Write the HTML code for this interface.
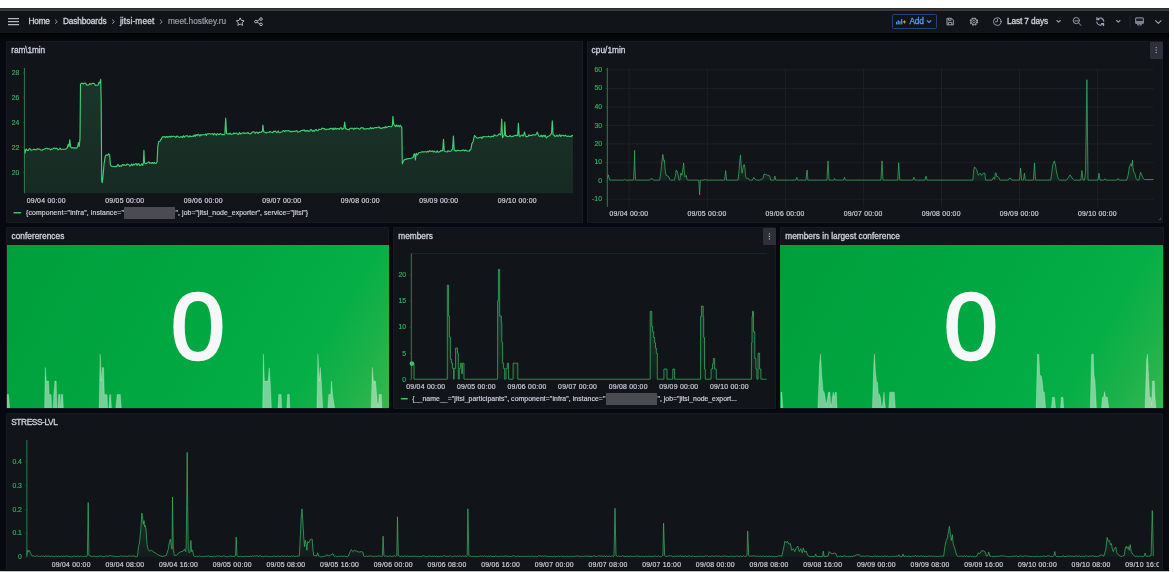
<!DOCTYPE html>
<html lang="en">
<head>
<meta charset="utf-8">
<title>meet.hostkey.ru - jitsi-meet - Dashboards - Grafana</title>
<style>
html,body{margin:0;padding:0;}
body{width:1174px;height:572px;overflow:hidden;background:#fff;position:relative;font-family:"Liberation Sans",sans-serif;}
.win{position:absolute;left:0;top:8px;width:1169px;height:563px;background:#070910;overflow:hidden;}
.edge{position:absolute;left:0;top:570px;width:1169px;height:2px;background:linear-gradient(#0a0c10 0,#0a0c10 50%,#c4c4c6 50%,#c4c4c6 100%);}
.chrome{position:absolute;left:0;top:8px;width:1169px;height:3px;background:#3a3a3a;border-top:1px solid #2a2a2a;box-sizing:border-box;}
.shadow{position:absolute;left:0;top:33px;width:1169px;height:6px;background:linear-gradient(#010102,#070910);}
.topbar{position:absolute;left:0;top:11px;width:1169px;height:22px;background:#111419;}
.t{position:absolute;white-space:nowrap;margin:0;padding:0;-webkit-text-stroke:0.18px;}
.panel{position:absolute;background:#111419;border:1px solid #171a20;box-sizing:border-box;border-radius:1px;overflow:hidden;}
.abs{position:absolute;left:0;top:0;}
svg{display:block;}
.layer{position:absolute;left:0;top:0;width:1174px;height:572px;will-change:transform;}
h2.t,a.t,b.t,.t.m{font-weight:400;text-decoration:none;-webkit-text-stroke:0.3px;}
.kebab{position:absolute;background:#2d3039;border-radius:1px;}
.redact{position:absolute;background:#4b4c51;}
.addbtn{position:absolute;left:892px;top:14px;width:44.5px;height:14.5px;box-sizing:border-box;border:1px solid #244378;border-radius:1.5px;}
.stat{position:absolute;background:linear-gradient(120deg,#009f3c 0%,#00a640 40%,#05ae46 78%,#1eb24a 90%,#38b751 100%);overflow:hidden;}
</style>
</head>
<body>
<div class="win"></div>
<div class="shadow"></div>
<div class="chrome"></div>

<!-- ===== top navigation bar ===== -->
<header class="topbar"></header>
<svg class="abs" width="1174" height="40" viewBox="0 0 1174 40" style="position:absolute">
  <!-- hamburger -->
  <g stroke="#b4b6c2" stroke-width="1.1" fill="none">
    <path d="M8,18.6H19M8,21.6H19M8,24.6H19"/>
  </g>
  <!-- breadcrumb chevrons -->
  <g stroke="#8f91a0" stroke-width="1" fill="none" stroke-linecap="round" stroke-linejoin="round">
    <path d="M55.3,19.9l2,1.8l-2,1.8"/>
    <path d="M112.4,19.9l2,1.8l-2,1.8"/>
    <path d="M160.2,19.9l2,1.8l-2,1.8"/>
  </g>
  <!-- star -->
  <path d="M240.2,17.9l1.2,2.5l2.7,.4l-2,1.9l.5,2.7l-2.4,-1.3l-2.4,1.3l.5,-2.7l-2,-1.9l2.7,-.4z" fill="none" stroke="#c4c6d2" stroke-width="0.9" stroke-linejoin="round"/>
  <!-- share -->
  <g fill="none" stroke="#c4c6d2" stroke-width="0.9">
    <circle cx="261" cy="19.05" r="1.3"/><circle cx="255.9" cy="21.6" r="1.3"/><circle cx="261" cy="24.35" r="1.3"/>
    <path d="M257.1,21l2.7,-1.4M257.1,22.2l2.7,1.5"/>
  </g>
  <!-- add icon -->
  <g fill="#5794f2">
    <rect x="896" y="21.8" width="1.2" height="2.6"/><rect x="897.7" y="20.3" width="1.2" height="4.1"/><rect x="899.4" y="21.2" width="1.2" height="3.2"/><rect x="901.1" y="19" width="1.2" height="5.4"/>
  </g>
  <path d="M904.4,19.9l.6,1.4l1.4,.6l-1.4,.6l-.6,1.4l-.6,-1.4l-1.4,-.6l1.4,-.6z" fill="#ff9830"/>
  <path d="M927.2,20.7l1.85,1.8l1.85,-1.8" fill="none" stroke="#5d8de8" stroke-width="1.15" stroke-linecap="round" stroke-linejoin="round"/>
  <!-- save -->
  <g fill="none" stroke="#a9abb8" stroke-width="0.9" stroke-linejoin="round">
    <path d="M947,18.3h4.6l1.8,1.8v4.7h-6.4z"/><path d="M948.5,18.4v1.9h2.6v-1.9M948.4,24.7v-2.3h3.4v2.3"/>
  </g>
  <!-- gear -->
  <g fill="none" stroke="#a3a5b2">
    <circle cx="973.9" cy="21.55" r="3.55" stroke-width="1.2" stroke-dasharray="1.75 1.04"/>
    <circle cx="973.9" cy="21.55" r="2.9" stroke-width="0.9"/>
    <circle cx="973.9" cy="21.55" r="1.15" stroke-width="0.8"/>
  </g>
  <!-- clock -->
  <g fill="none" stroke="#a3a5b2" stroke-width="0.9" stroke-linecap="round">
    <circle cx="997.3" cy="21.6" r="3.8"/><path d="M997.4,19.2v2.5h-1.7"/>
  </g>
  <path d="M1056.9,20.5l1.7,1.6l1.7,-1.6" fill="none" stroke="#9698a6" stroke-width="1.15" stroke-linecap="round" stroke-linejoin="round"/>
  <!-- zoom out -->
  <g fill="none" stroke="#a3a5b2" stroke-width="0.9" stroke-linecap="round">
    <circle cx="1076.3" cy="20.6" r="3.1"/><path d="M1078.7,23l2.2,2.4M1074.7,20.9h3.2"/>
  </g>
  <!-- refresh -->
  <g fill="none" stroke="#a3a5b2" stroke-width="1.15" stroke-linecap="round" stroke-linejoin="round">
    <path d="M1097.3,19.5a3.6,3.6 0 0 1 6.5,1.6"/><path d="M1103.2,23.6a3.6,3.6 0 0 1 -6.5,-1.6"/>
    <path d="M1096.9,17.5v2.1h2.1M1103.6,25.6v-2.1h-2.1"/>
  </g>
  <path d="M1116.6,20.5l1.7,1.6l1.7,-1.6" fill="none" stroke="#9698a6" stroke-width="1.15" stroke-linecap="round" stroke-linejoin="round"/>
  <rect x="1129.2" y="15.2" width="1.4" height="12.6" fill="#1c1f26"/>
  <!-- monitor -->
  <path d="M1136.6,17.3h5.8a1.6,1.6 0 0 1 1.6,1.6v3.6a1.6,1.6 0 0 1 -1.6,1.6h-.4l-.6,1.5h-3.8l-.6,-1.5h-.4a1.6,1.6 0 0 1 -1.6,-1.6v-3.6a1.6,1.6 0 0 1 1.6,-1.6z" fill="#7f818e"/>
  <rect x="1136.2" y="18.5" width="6.6" height="2.4" rx=".5" fill="#1a1d23"/>
  <rect x="1138.9" y="24.2" width="1.2" height="1" fill="#2a2d35"/>
  <path d="M1155.5,20.7l2.8,2.7l2.8,-2.7" fill="none" stroke="#a6a8b4" stroke-width="1.05" stroke-linecap="round" stroke-linejoin="round"/>
</svg>
<div class="addbtn"></div>
<nav class="layer">
<a class="t" style="left:28.60px;top:15px;font-size:8.3px;line-height:12px;color:#d2d3de;letter-spacing:-0.280px;">Home</a>
<a class="t" style="left:63.00px;top:15px;font-size:8.3px;line-height:12px;color:#d2d3de;letter-spacing:-0.128px;">Dashboards</a>
<a class="t" style="left:119.90px;top:15px;font-size:8.3px;line-height:12px;color:#d2d3de;letter-spacing:0.122px;">jitsi-meet</a>
<span class="t" style="left:167.90px;top:15px;font-size:8.3px;line-height:12px;color:#9fa1ad;letter-spacing:-0.010px;">meet.hostkey.ru</span>
<b class="t" style="left:909.60px;top:15px;font-size:8.3px;line-height:12px;color:#6296ee;letter-spacing:-0.284px;font-weight:400;">Add</b>
<span class="t m" style="left:1006.90px;top:15px;font-size:8.3px;line-height:12px;color:#d2d3de;letter-spacing:-0.105px;">Last 7 days</span>
</nav>

<!-- ===== row 1 ===== -->
<section class="panel" style="left:6.4px;top:40.6px;width:576.7px;height:182.4px;"></section>
<section class="panel" style="left:586.8px;top:40.6px;width:576.7px;height:182.4px;"></section>
<!-- ===== row 2 ===== -->
<section class="panel" style="left:6.4px;top:226.6px;width:382.6px;height:182.2px;"></section>
<section class="panel" style="left:392.9px;top:226.6px;width:383.2px;height:182.2px;"></section>
<section class="panel" style="left:780px;top:226.6px;width:383.5px;height:182.2px;"></section>
<!-- ===== row 3 ===== -->
<section class="panel" style="left:6.4px;top:412.6px;width:1157.1px;height:170px;"></section>

<div class="edge"></div>
<div class="stat" style="left:7px;top:245px;width:382px;height:163.3px;"></div>
<div class="stat" style="left:780.4px;top:245px;width:382.4px;height:163.3px;"></div>
<div class="kebab" style="left:1150px;top:41.5px;width:12.5px;height:17.5px;"></div>
<div class="kebab" style="left:763.3px;top:227.7px;width:12.3px;height:17.5px;"></div>

<!-- ===== charts ===== -->
<svg class="abs" width="1174" height="572" viewBox="0 0 1174 572" style="position:absolute">
  <defs>
    <linearGradient id="gfill" x1="0" y1="0" x2="0" y2="1">
      <stop offset="0" stop-color="#3fc06a" stop-opacity="0.20"/>
      <stop offset="1" stop-color="#3fc06a" stop-opacity="0.13"/>
    </linearGradient>
    <linearGradient id="gfill2" x1="0" y1="0" x2="0" y2="1">
      <stop offset="0" stop-color="#3fc06a" stop-opacity="0.35"/>
      <stop offset="1" stop-color="#3fc06a" stop-opacity="0.05"/>
    </linearGradient>
    <clipPath id="clipst"><rect x="0" y="413" width="1158.5" height="158"/></clipPath>
  </defs>
  <!-- kebab dots -->
  <g fill="#b9bbc6">
    <circle cx="1156.2" cy="47.6" r=".7"/><circle cx="1156.2" cy="50.1" r=".7"/><circle cx="1156.2" cy="52.6" r=".7"/>
    <circle cx="769.4" cy="233.9" r=".7"/><circle cx="769.4" cy="236.4" r=".7"/><circle cx="769.4" cy="238.9" r=".7"/>
  </g>

  <!-- RAM -->
  <path d="M24.7,149.1 L24.9,153.3 L25.7,150.4 L26.5,149.1 L27.3,150.5 L28.2,150.5 L29.2,148.7 L30.1,148.8 L31.0,150.2 L32.0,150.0 L32.9,149.8 L33.9,149.1 L34.8,149.7 L35.7,149.6 L36.7,149.6 L37.6,148.7 L38.5,149.2 L39.5,149.1 L40.4,149.7 L41.3,150.2 L42.3,150.1 L43.2,149.3 L44.2,149.1 L45.1,148.7 L46.0,148.2 L47.0,148.2 L47.9,149.0 L48.8,148.7 L49.8,148.8 L50.7,149.8 L51.6,149.0 L52.6,149.1 L53.5,148.4 L54.4,148.0 L55.4,148.6 L56.3,148.2 L57.3,148.9 L58.2,149.8 L59.1,149.1 L60.1,148.2 L61.0,149.5 L61.9,149.3 L62.9,149.2 L63.8,149.5 L64.7,149.2 L65.7,149.2 L66.6,148.3 L67.4,147.5 L68.2,144.4 L69.0,146.5 L69.8,139.9 L70.6,147.0 L71.9,148.1 L72.9,147.6 L73.9,148.1 L74.8,147.7 L75.7,148.1 L76.7,148.1 L77.6,147.0 L78.4,142.6 L79.2,146.5 L80.0,138.6 L80.5,84.1 L81.3,83.4 L82.2,83.1 L83.2,83.9 L84.1,83.3 L85.0,83.0 L86.0,83.9 L86.9,85.3 L87.8,85.0 L88.8,84.9 L89.7,83.5 L90.6,84.4 L91.5,83.7 L92.5,83.4 L93.4,83.3 L94.3,83.6 L95.3,85.5 L96.2,85.2 L97.1,85.2 L98.1,85.2 L98.9,82.3 L99.9,83.1 L100.7,79.4 L101.2,101.9 L101.7,180.6 L102.3,182.7 L103.1,175.3 L104.1,163.5 L105.4,155.7 L106.5,154.9 L107.5,155.4 L108.6,153.8 L109.6,154.9 L110.4,164.8 L111.4,166.2 L112.2,166.2 L113.1,166.4 L114.1,166.5 L115.0,166.8 L115.9,166.3 L116.8,166.6 L117.8,164.5 L118.7,165.5 L119.6,166.5 L120.5,165.8 L121.4,166.3 L122.4,164.5 L123.3,165.3 L124.2,164.7 L125.1,165.3 L126.0,165.4 L127.0,164.0 L127.9,164.4 L128.8,164.5 L129.7,165.9 L130.7,165.6 L131.6,164.1 L132.5,165.5 L133.4,164.0 L134.3,165.0 L135.3,163.8 L136.2,163.5 L137.1,165.5 L138.0,163.9 L138.9,163.9 L139.9,165.6 L140.8,165.3 L141.7,163.9 L142.6,165.4 L143.4,163.3 L143.9,150.4 L144.5,162.8 L145.3,163.7 L146.2,163.7 L147.1,162.9 L148.0,162.4 L148.9,161.8 L149.8,163.3 L150.8,162.8 L151.7,163.5 L152.6,162.5 L153.5,163.4 L154.4,162.3 L155.3,163.5 L156.3,163.3 L157.1,161.7 L157.8,146.5 L158.6,141.8 L159.9,141.3 L161.5,138.6 L162.8,136.5 L163.9,137.0 L164.8,136.6 L165.7,137.6 L166.6,136.4 L167.6,137.3 L168.5,136.9 L169.4,136.3 L170.3,137.1 L171.3,136.2 L172.2,136.9 L173.1,136.2 L174.0,136.2 L175.0,136.8 L175.9,137.5 L176.8,136.1 L177.8,136.3 L178.7,137.1 L179.6,137.6 L180.5,136.9 L181.5,136.5 L182.4,137.6 L183.3,135.7 L184.2,137.3 L185.2,136.2 L186.1,135.8 L187.0,135.8 L187.9,136.1 L188.9,137.1 L189.8,135.8 L190.7,136.5 L191.6,136.6 L192.6,136.1 L193.5,136.4 L194.3,135.0 L195.2,136.3 L196.1,134.6 L197.1,135.7 L198.0,134.4 L198.9,134.7 L199.9,136.1 L200.8,134.5 L201.7,135.2 L202.7,134.8 L203.6,134.7 L204.5,134.8 L205.5,134.1 L206.4,135.3 L207.3,133.8 L208.3,134.0 L209.2,133.5 L210.5,134.1 L211.5,134.0 L212.4,133.5 L213.4,135.0 L214.4,133.3 L215.4,134.3 L216.3,135.1 L217.3,133.5 L218.3,134.4 L219.2,134.6 L220.2,133.5 L221.2,134.1 L222.2,134.8 L223.1,134.3 L224.1,134.9 L224.9,133.4 L225.7,118.2 L226.5,133.4 L227.3,134.1 L228.2,133.7 L229.1,134.0 L230.1,133.2 L231.0,134.4 L231.9,134.3 L232.9,134.0 L233.8,133.0 L234.7,133.6 L235.7,133.2 L236.6,133.0 L237.5,134.3 L238.5,134.4 L239.4,132.5 L240.4,134.0 L241.3,133.5 L242.2,133.0 L243.2,132.8 L244.1,133.5 L245.0,133.0 L246.0,133.4 L246.9,133.3 L247.8,132.3 L248.8,133.5 L249.7,133.8 L250.6,133.8 L251.6,133.0 L252.5,131.9 L253.4,131.8 L254.4,132.0 L255.3,133.5 L256.3,132.2 L257.2,132.3 L258.1,133.3 L259.1,132.1 L260.0,132.5 L260.9,132.3 L261.9,131.5 L262.4,131.3 L262.9,125.0 L263.7,131.8 L264.5,132.3 L265.4,132.4 L266.3,133.1 L267.2,132.2 L268.2,132.2 L269.1,132.3 L270.0,131.5 L270.9,132.1 L271.9,132.3 L272.8,132.6 L273.7,131.2 L274.6,131.6 L275.5,131.1 L276.5,132.5 L277.4,132.2 L278.3,130.9 L279.2,132.7 L280.2,132.6 L281.1,132.0 L282.0,131.9 L282.9,130.9 L283.8,130.6 L284.8,131.6 L285.7,130.6 L286.6,130.9 L287.5,130.9 L288.5,130.5 L289.4,131.3 L290.3,131.2 L291.2,132.0 L292.1,131.3 L293.1,131.5 L294.0,131.2 L294.9,131.5 L295.8,131.0 L296.8,130.6 L297.7,132.0 L298.6,132.0 L299.5,131.6 L300.4,131.3 L301.4,130.5 L302.3,130.3 L303.2,130.4 L304.1,129.9 L305.0,131.3 L306.0,130.5 L306.9,131.4 L307.8,130.4 L308.7,131.5 L309.7,131.3 L310.6,129.6 L311.5,129.9 L312.4,131.3 L313.3,130.4 L314.3,131.3 L315.2,130.2 L316.1,129.5 L317.0,130.5 L318.0,130.8 L319.0,129.2 L319.9,129.5 L320.9,129.5 L321.8,128.4 L322.7,128.2 L323.6,128.9 L324.6,128.6 L325.5,129.7 L326.4,129.4 L327.4,129.2 L328.3,129.1 L329.2,129.3 L330.1,128.3 L331.1,128.8 L332.0,128.3 L332.9,129.7 L333.8,128.0 L334.8,129.5 L335.7,128.0 L336.6,129.2 L337.6,128.5 L338.5,128.6 L339.4,129.4 L340.3,127.8 L341.3,127.9 L342.2,129.5 L343.1,128.7 L343.9,128.2 L344.7,122.1 L345.5,128.7 L346.3,128.7 L347.2,129.5 L348.1,129.5 L349.1,129.8 L350.0,128.4 L350.9,128.4 L351.9,128.2 L352.8,128.3 L353.7,129.3 L354.7,128.1 L355.6,128.8 L356.5,128.1 L357.5,128.2 L358.4,128.5 L359.3,129.2 L360.3,128.7 L361.2,127.5 L362.2,128.0 L363.1,127.7 L364.0,129.1 L365.0,128.9 L365.9,128.8 L366.8,128.8 L367.8,128.6 L368.7,129.0 L369.6,128.6 L370.6,127.5 L371.5,128.7 L372.4,127.9 L373.4,128.4 L374.3,128.0 L375.2,127.6 L376.2,127.5 L377.1,127.6 L378.0,127.3 L379.0,126.9 L379.9,128.2 L380.8,128.1 L381.8,128.4 L382.7,127.8 L383.6,127.5 L384.6,127.8 L385.5,126.6 L386.4,127.6 L387.4,127.1 L388.3,126.5 L389.3,126.5 L391.3,126.8 L392.4,125.5 L392.9,116.4 L393.7,124.2 L394.7,125.5 L395.5,126.6 L396.5,125.0 L397.4,126.3 L398.4,125.4 L399.3,126.8 L400.3,125.2 L401.3,126.7 L401.8,127.1 L402.3,163.8 L403.1,161.7 L404.4,159.6 L406.3,159.1 L408.3,158.6 L411.0,158.3 L413.1,157.5 L413.9,154.4 L414.6,153.8 L415.4,159.9 L416.2,153.3 L417.3,154.9 L418.8,152.8 L420.9,152.3 L422.0,151.7 L422.9,151.9 L423.9,151.8 L424.8,151.8 L425.8,151.7 L426.7,152.1 L427.7,151.3 L428.6,152.0 L429.6,150.7 L430.5,151.3 L431.5,151.3 L432.4,150.9 L433.4,152.0 L434.3,151.1 L435.3,152.0 L436.2,152.3 L437.2,150.9 L438.1,152.1 L439.1,151.9 L440.0,151.6 L441.0,150.3 L441.9,151.1 L442.7,150.7 L443.5,139.4 L444.3,151.2 L445.0,151.3 L446.0,151.7 L447.0,152.0 L448.0,150.6 L448.9,151.4 L449.9,151.2 L450.9,151.1 L451.9,149.9 L452.6,149.1 L453.4,136.0 L454.2,150.2 L455.0,150.3 L456.0,151.2 L456.9,150.5 L457.9,150.2 L458.8,150.7 L459.8,150.7 L460.7,150.6 L461.7,150.5 L462.6,150.1 L463.6,150.0 L464.5,150.8 L465.5,150.1 L466.4,150.7 L467.4,150.9 L468.3,151.0 L469.3,151.1 L470.2,149.6 L471.0,149.1 L471.8,143.9 L473.1,141.8 L474.4,135.5 L476.0,137.1 L477.0,138.0 L478.0,138.2 L479.0,137.6 L479.9,137.5 L480.9,137.2 L481.9,138.5 L482.8,136.9 L483.8,136.5 L484.8,136.7 L485.7,136.7 L486.7,136.8 L487.7,136.6 L488.6,136.2 L489.6,136.7 L490.7,136.9 L491.6,136.3 L492.5,136.3 L493.5,136.5 L494.4,134.8 L495.4,135.5 L496.3,136.0 L497.3,135.8 L498.2,134.9 L499.1,133.8 L500.1,134.2 L500.9,135.0 L501.7,119.0 L502.5,137.6 L503.5,136.0 L504.3,135.0 L504.8,122.1 L505.6,136.0 L506.4,135.6 L507.3,136.6 L508.3,136.5 L509.2,136.2 L510.2,135.6 L511.1,136.7 L512.1,136.7 L513.1,136.1 L514.0,136.1 L515.0,135.5 L515.9,135.1 L516.9,135.8 L517.7,135.5 L518.4,123.4 L519.2,136.0 L520.0,136.6 L521.1,135.4 L522.1,135.0 L523.2,136.1 L523.9,134.4 L524.5,131.8 L525.3,135.5 L526.0,136.6 L527.0,136.6 L528.0,136.4 L529.0,134.8 L529.9,135.7 L530.9,135.3 L531.9,135.5 L532.8,134.7 L533.8,134.7 L534.8,135.2 L535.7,134.7 L536.5,133.9 L537.3,132.1 L538.4,135.0 L539.1,136.2 L540.2,136.5 L541.2,135.2 L542.2,136.9 L543.2,135.3 L544.2,136.3 L545.2,135.2 L546.2,137.9 L547.8,136.5 L549.9,135.5 L551.5,133.4 L552.3,120.8 L553.0,134.4 L554.1,135.2 L555.0,136.4 L556.0,136.2 L556.9,135.0 L557.9,136.3 L558.8,135.9 L559.8,134.7 L560.7,136.6 L561.6,135.2 L562.6,135.3 L563.5,135.6 L564.5,136.0 L565.4,135.1 L566.4,136.2 L567.3,136.5 L568.2,135.9 L569.2,136.5 L570.1,136.2 L571.1,136.6 L572.0,135.4 L573.0,135.7 L573.0,193.2 L24.7,193.2 Z" fill="url(#gfill)"/>
  <path d="M24.7,149.1 L24.9,153.3 L25.7,150.4 L26.5,149.1 L27.3,150.5 L28.2,150.5 L29.2,148.7 L30.1,148.8 L31.0,150.2 L32.0,150.0 L32.9,149.8 L33.9,149.1 L34.8,149.7 L35.7,149.6 L36.7,149.6 L37.6,148.7 L38.5,149.2 L39.5,149.1 L40.4,149.7 L41.3,150.2 L42.3,150.1 L43.2,149.3 L44.2,149.1 L45.1,148.7 L46.0,148.2 L47.0,148.2 L47.9,149.0 L48.8,148.7 L49.8,148.8 L50.7,149.8 L51.6,149.0 L52.6,149.1 L53.5,148.4 L54.4,148.0 L55.4,148.6 L56.3,148.2 L57.3,148.9 L58.2,149.8 L59.1,149.1 L60.1,148.2 L61.0,149.5 L61.9,149.3 L62.9,149.2 L63.8,149.5 L64.7,149.2 L65.7,149.2 L66.6,148.3 L67.4,147.5 L68.2,144.4 L69.0,146.5 L69.8,139.9 L70.6,147.0 L71.9,148.1 L72.9,147.6 L73.9,148.1 L74.8,147.7 L75.7,148.1 L76.7,148.1 L77.6,147.0 L78.4,142.6 L79.2,146.5 L80.0,138.6 L80.5,84.1 L81.3,83.4 L82.2,83.1 L83.2,83.9 L84.1,83.3 L85.0,83.0 L86.0,83.9 L86.9,85.3 L87.8,85.0 L88.8,84.9 L89.7,83.5 L90.6,84.4 L91.5,83.7 L92.5,83.4 L93.4,83.3 L94.3,83.6 L95.3,85.5 L96.2,85.2 L97.1,85.2 L98.1,85.2 L98.9,82.3 L99.9,83.1 L100.7,79.4 L101.2,101.9 L101.7,180.6 L102.3,182.7 L103.1,175.3 L104.1,163.5 L105.4,155.7 L106.5,154.9 L107.5,155.4 L108.6,153.8 L109.6,154.9 L110.4,164.8 L111.4,166.2 L112.2,166.2 L113.1,166.4 L114.1,166.5 L115.0,166.8 L115.9,166.3 L116.8,166.6 L117.8,164.5 L118.7,165.5 L119.6,166.5 L120.5,165.8 L121.4,166.3 L122.4,164.5 L123.3,165.3 L124.2,164.7 L125.1,165.3 L126.0,165.4 L127.0,164.0 L127.9,164.4 L128.8,164.5 L129.7,165.9 L130.7,165.6 L131.6,164.1 L132.5,165.5 L133.4,164.0 L134.3,165.0 L135.3,163.8 L136.2,163.5 L137.1,165.5 L138.0,163.9 L138.9,163.9 L139.9,165.6 L140.8,165.3 L141.7,163.9 L142.6,165.4 L143.4,163.3 L143.9,150.4 L144.5,162.8 L145.3,163.7 L146.2,163.7 L147.1,162.9 L148.0,162.4 L148.9,161.8 L149.8,163.3 L150.8,162.8 L151.7,163.5 L152.6,162.5 L153.5,163.4 L154.4,162.3 L155.3,163.5 L156.3,163.3 L157.1,161.7 L157.8,146.5 L158.6,141.8 L159.9,141.3 L161.5,138.6 L162.8,136.5 L163.9,137.0 L164.8,136.6 L165.7,137.6 L166.6,136.4 L167.6,137.3 L168.5,136.9 L169.4,136.3 L170.3,137.1 L171.3,136.2 L172.2,136.9 L173.1,136.2 L174.0,136.2 L175.0,136.8 L175.9,137.5 L176.8,136.1 L177.8,136.3 L178.7,137.1 L179.6,137.6 L180.5,136.9 L181.5,136.5 L182.4,137.6 L183.3,135.7 L184.2,137.3 L185.2,136.2 L186.1,135.8 L187.0,135.8 L187.9,136.1 L188.9,137.1 L189.8,135.8 L190.7,136.5 L191.6,136.6 L192.6,136.1 L193.5,136.4 L194.3,135.0 L195.2,136.3 L196.1,134.6 L197.1,135.7 L198.0,134.4 L198.9,134.7 L199.9,136.1 L200.8,134.5 L201.7,135.2 L202.7,134.8 L203.6,134.7 L204.5,134.8 L205.5,134.1 L206.4,135.3 L207.3,133.8 L208.3,134.0 L209.2,133.5 L210.5,134.1 L211.5,134.0 L212.4,133.5 L213.4,135.0 L214.4,133.3 L215.4,134.3 L216.3,135.1 L217.3,133.5 L218.3,134.4 L219.2,134.6 L220.2,133.5 L221.2,134.1 L222.2,134.8 L223.1,134.3 L224.1,134.9 L224.9,133.4 L225.7,118.2 L226.5,133.4 L227.3,134.1 L228.2,133.7 L229.1,134.0 L230.1,133.2 L231.0,134.4 L231.9,134.3 L232.9,134.0 L233.8,133.0 L234.7,133.6 L235.7,133.2 L236.6,133.0 L237.5,134.3 L238.5,134.4 L239.4,132.5 L240.4,134.0 L241.3,133.5 L242.2,133.0 L243.2,132.8 L244.1,133.5 L245.0,133.0 L246.0,133.4 L246.9,133.3 L247.8,132.3 L248.8,133.5 L249.7,133.8 L250.6,133.8 L251.6,133.0 L252.5,131.9 L253.4,131.8 L254.4,132.0 L255.3,133.5 L256.3,132.2 L257.2,132.3 L258.1,133.3 L259.1,132.1 L260.0,132.5 L260.9,132.3 L261.9,131.5 L262.4,131.3 L262.9,125.0 L263.7,131.8 L264.5,132.3 L265.4,132.4 L266.3,133.1 L267.2,132.2 L268.2,132.2 L269.1,132.3 L270.0,131.5 L270.9,132.1 L271.9,132.3 L272.8,132.6 L273.7,131.2 L274.6,131.6 L275.5,131.1 L276.5,132.5 L277.4,132.2 L278.3,130.9 L279.2,132.7 L280.2,132.6 L281.1,132.0 L282.0,131.9 L282.9,130.9 L283.8,130.6 L284.8,131.6 L285.7,130.6 L286.6,130.9 L287.5,130.9 L288.5,130.5 L289.4,131.3 L290.3,131.2 L291.2,132.0 L292.1,131.3 L293.1,131.5 L294.0,131.2 L294.9,131.5 L295.8,131.0 L296.8,130.6 L297.7,132.0 L298.6,132.0 L299.5,131.6 L300.4,131.3 L301.4,130.5 L302.3,130.3 L303.2,130.4 L304.1,129.9 L305.0,131.3 L306.0,130.5 L306.9,131.4 L307.8,130.4 L308.7,131.5 L309.7,131.3 L310.6,129.6 L311.5,129.9 L312.4,131.3 L313.3,130.4 L314.3,131.3 L315.2,130.2 L316.1,129.5 L317.0,130.5 L318.0,130.8 L319.0,129.2 L319.9,129.5 L320.9,129.5 L321.8,128.4 L322.7,128.2 L323.6,128.9 L324.6,128.6 L325.5,129.7 L326.4,129.4 L327.4,129.2 L328.3,129.1 L329.2,129.3 L330.1,128.3 L331.1,128.8 L332.0,128.3 L332.9,129.7 L333.8,128.0 L334.8,129.5 L335.7,128.0 L336.6,129.2 L337.6,128.5 L338.5,128.6 L339.4,129.4 L340.3,127.8 L341.3,127.9 L342.2,129.5 L343.1,128.7 L343.9,128.2 L344.7,122.1 L345.5,128.7 L346.3,128.7 L347.2,129.5 L348.1,129.5 L349.1,129.8 L350.0,128.4 L350.9,128.4 L351.9,128.2 L352.8,128.3 L353.7,129.3 L354.7,128.1 L355.6,128.8 L356.5,128.1 L357.5,128.2 L358.4,128.5 L359.3,129.2 L360.3,128.7 L361.2,127.5 L362.2,128.0 L363.1,127.7 L364.0,129.1 L365.0,128.9 L365.9,128.8 L366.8,128.8 L367.8,128.6 L368.7,129.0 L369.6,128.6 L370.6,127.5 L371.5,128.7 L372.4,127.9 L373.4,128.4 L374.3,128.0 L375.2,127.6 L376.2,127.5 L377.1,127.6 L378.0,127.3 L379.0,126.9 L379.9,128.2 L380.8,128.1 L381.8,128.4 L382.7,127.8 L383.6,127.5 L384.6,127.8 L385.5,126.6 L386.4,127.6 L387.4,127.1 L388.3,126.5 L389.3,126.5 L391.3,126.8 L392.4,125.5 L392.9,116.4 L393.7,124.2 L394.7,125.5 L395.5,126.6 L396.5,125.0 L397.4,126.3 L398.4,125.4 L399.3,126.8 L400.3,125.2 L401.3,126.7 L401.8,127.1 L402.3,163.8 L403.1,161.7 L404.4,159.6 L406.3,159.1 L408.3,158.6 L411.0,158.3 L413.1,157.5 L413.9,154.4 L414.6,153.8 L415.4,159.9 L416.2,153.3 L417.3,154.9 L418.8,152.8 L420.9,152.3 L422.0,151.7 L422.9,151.9 L423.9,151.8 L424.8,151.8 L425.8,151.7 L426.7,152.1 L427.7,151.3 L428.6,152.0 L429.6,150.7 L430.5,151.3 L431.5,151.3 L432.4,150.9 L433.4,152.0 L434.3,151.1 L435.3,152.0 L436.2,152.3 L437.2,150.9 L438.1,152.1 L439.1,151.9 L440.0,151.6 L441.0,150.3 L441.9,151.1 L442.7,150.7 L443.5,139.4 L444.3,151.2 L445.0,151.3 L446.0,151.7 L447.0,152.0 L448.0,150.6 L448.9,151.4 L449.9,151.2 L450.9,151.1 L451.9,149.9 L452.6,149.1 L453.4,136.0 L454.2,150.2 L455.0,150.3 L456.0,151.2 L456.9,150.5 L457.9,150.2 L458.8,150.7 L459.8,150.7 L460.7,150.6 L461.7,150.5 L462.6,150.1 L463.6,150.0 L464.5,150.8 L465.5,150.1 L466.4,150.7 L467.4,150.9 L468.3,151.0 L469.3,151.1 L470.2,149.6 L471.0,149.1 L471.8,143.9 L473.1,141.8 L474.4,135.5 L476.0,137.1 L477.0,138.0 L478.0,138.2 L479.0,137.6 L479.9,137.5 L480.9,137.2 L481.9,138.5 L482.8,136.9 L483.8,136.5 L484.8,136.7 L485.7,136.7 L486.7,136.8 L487.7,136.6 L488.6,136.2 L489.6,136.7 L490.7,136.9 L491.6,136.3 L492.5,136.3 L493.5,136.5 L494.4,134.8 L495.4,135.5 L496.3,136.0 L497.3,135.8 L498.2,134.9 L499.1,133.8 L500.1,134.2 L500.9,135.0 L501.7,119.0 L502.5,137.6 L503.5,136.0 L504.3,135.0 L504.8,122.1 L505.6,136.0 L506.4,135.6 L507.3,136.6 L508.3,136.5 L509.2,136.2 L510.2,135.6 L511.1,136.7 L512.1,136.7 L513.1,136.1 L514.0,136.1 L515.0,135.5 L515.9,135.1 L516.9,135.8 L517.7,135.5 L518.4,123.4 L519.2,136.0 L520.0,136.6 L521.1,135.4 L522.1,135.0 L523.2,136.1 L523.9,134.4 L524.5,131.8 L525.3,135.5 L526.0,136.6 L527.0,136.6 L528.0,136.4 L529.0,134.8 L529.9,135.7 L530.9,135.3 L531.9,135.5 L532.8,134.7 L533.8,134.7 L534.8,135.2 L535.7,134.7 L536.5,133.9 L537.3,132.1 L538.4,135.0 L539.1,136.2 L540.2,136.5 L541.2,135.2 L542.2,136.9 L543.2,135.3 L544.2,136.3 L545.2,135.2 L546.2,137.9 L547.8,136.5 L549.9,135.5 L551.5,133.4 L552.3,120.8 L553.0,134.4 L554.1,135.2 L555.0,136.4 L556.0,136.2 L556.9,135.0 L557.9,136.3 L558.8,135.9 L559.8,134.7 L560.7,136.6 L561.6,135.2 L562.6,135.3 L563.5,135.6 L564.5,136.0 L565.4,135.1 L566.4,136.2 L567.3,136.5 L568.2,135.9 L569.2,136.5 L570.1,136.2 L571.1,136.6 L572.0,135.4 L573.0,135.7" fill="none" stroke="#41cd71" stroke-width="1.15" stroke-linejoin="round"/>
  <path d="M24.4,67.9V193.4" stroke="#2f9e55" stroke-width="0.8"/>
  <path d="M46.2,193.4v1.4M124.7,193.4v1.4M203.2,193.4v1.4M281.7,193.4v1.4M360.2,193.4v1.4M438.7,193.4v1.4M517.2,193.4v1.4" stroke="#24272e" stroke-width="0.6"/><path d="M22.6,72.9h1.6M22.6,97.8h1.6M22.6,122.7h1.6M22.6,147.6h1.6M22.6,172.5h1.6" stroke="#1f5f3a" stroke-width="0.6"/>

  <!-- CPU -->
  <path d="M607.3,69.9H1153.6M607.3,88.4H1153.6M607.3,106.9H1153.6M607.3,125.4H1153.6M607.3,143.9H1153.6M607.3,162.3H1153.6M607.3,180.8H1153.6M607.3,199.2H1153.6M629.2,67.9V206.8M707.3,67.9V206.8M785.4,67.9V206.8M863.4,67.9V206.8M941.5,67.9V206.8M1019.6,67.9V206.8M1097.7,67.9V206.8" stroke="#22252c" stroke-width="0.7" fill="none"/><path d="M605.5,69.9h1.6M605.5,88.4h1.6M605.5,106.9h1.6M605.5,125.4h1.6M605.5,143.9h1.6M605.5,162.3h1.6M605.5,180.8h1.6M605.5,199.2h1.6" stroke="#1f5f3a" stroke-width="0.6"/>
  <path d="M607.3,178.5 L608.3,174.8 L609.1,178.0 L609.9,180.1 L623.6,180.1 L624.6,179.3 L625.6,180.1 L633.5,180.1 L634.3,164.8 L634.6,150.4 L634.8,164.8 L635.6,180.1 L649.8,180.1 L650.8,178.7 L652.4,178.7 L653.4,180.1 L659.7,180.1 L660.8,172.7 L661.8,162.2 L662.9,154.4 L663.7,160.7 L664.4,160.1 L665.2,170.1 L666.0,175.3 L667.6,176.1 L668.6,176.6 L669.9,179.3 L670.7,180.1 L674.4,180.1 L675.5,175.3 L676.2,170.1 L677.0,171.1 L677.8,173.2 L678.6,178.5 L679.1,180.1 L679.9,180.1 L680.7,173.2 L681.9,175.3 L683.1,167.5 L683.6,163.0 L684.4,172.7 L684.9,176.9 L685.7,175.9 L686.2,175.3 L687.0,179.3 L687.5,180.1 L698.8,180.1 L699.6,195.0 L700.4,180.1 L704.5,180.1 L705.3,179.0 L706.1,180.1 L724.7,180.1 L725.6,170.6 L726.6,180.1 L738.1,180.1 L739.1,170.1 L739.9,159.6 L740.5,154.9 L741.2,164.8 L742.0,173.2 L743.1,167.5 L744.1,164.3 L744.9,167.5 L745.7,176.6 L746.7,178.5 L747.8,178.0 L748.8,179.5 L749.9,180.1 L752.5,180.1 L753.8,177.4 L755.1,179.3 L756.7,180.1 L759.9,180.1 L761.4,179.3 L763.0,178.5 L764.0,174.0 L765.6,174.5 L767.7,175.3 L769.8,175.9 L770.6,180.1 L774.0,180.1 L774.9,176.1 L775.8,180.1 L789.7,180.1 L790.5,180.1 L795.7,180.1 L796.8,177.4 L797.8,180.1 L806.0,180.1 L806.7,171.4 L807.3,170.1 L807.8,180.1 L826.9,180.1 L828.0,160.9 L829.0,180.1 L833.7,180.1 L834.5,178.5 L835.3,180.1 L843.4,180.1 L844.5,177.4 L845.5,180.1 L880.9,180.1 L882.0,160.9 L883.0,180.1 L897.7,180.1 L898.7,162.8 L899.8,180.1 L912.9,180.1 L913.9,177.2 L915.0,180.1 L925.0,180.1 L926.0,176.1 L927.1,180.1 L972.9,180.1 L973.7,170.1 L974.5,166.9 L975.5,168.0 L976.6,169.6 L977.6,173.2 L978.4,175.3 L979.2,174.3 L980.0,173.2 L981.0,174.8 L981.8,175.3 L982.6,173.8 L983.1,173.2 L984.9,173.2 L985.5,180.1 L992.0,180.1 L993.1,178.0 L993.6,177.4 L994.6,179.3 L995.4,173.2 L996.0,172.7 L996.7,176.6 L997.8,176.4 L998.8,177.4 L999.9,180.1 L1008.3,180.1 L1009.3,178.2 L1010.6,178.2 L1011.7,180.1 L1019.5,180.1 L1020.6,168.0 L1021.6,180.1 L1023.5,180.1 L1024.4,173.2 L1025.3,180.1 L1033.4,180.1 L1034.5,163.0 L1035.5,180.1 L1050.7,180.1 L1051.8,172.7 L1052.8,164.8 L1054.4,160.9 L1055.5,164.8 L1056.2,170.1 L1057.3,175.3 L1058.3,178.5 L1059.6,180.1 L1066.5,180.1 L1068.0,178.0 L1070.1,174.8 L1071.7,177.4 L1073.3,179.5 L1074.3,180.1 L1080.9,180.1 L1081.9,170.6 L1083.0,180.1 L1084.5,180.1 L1085.5,173.2 L1086.9,79.7 L1088.0,180.1 L1097.9,180.1 L1099.0,173.2 L1100.0,180.1 L1103.9,180.1 L1105.0,178.7 L1106.0,180.1 L1116.8,180.1 L1118.1,178.5 L1119.1,180.1 L1126.7,180.1 L1128.1,175.3 L1129.4,166.9 L1130.4,164.8 L1130.9,163.5 L1131.7,166.2 L1132.5,160.1 L1133.0,167.5 L1133.6,171.4 L1134.6,173.2 L1135.1,174.3 L1136.2,178.5 L1137.2,180.1 L1138.8,180.1 L1139.9,175.3 L1140.6,172.2 L1141.7,174.8 L1142.5,176.9 L1143.5,178.7 L1144.6,179.5 L1153.5,179.5 L1153.5,180.1 L607.3,180.1 Z" fill="url(#gfill2)"/>
  <path d="M607.3,178.5 L608.3,174.8 L609.1,178.0 L609.9,180.1 L623.6,180.1 L624.6,179.3 L625.6,180.1 L633.5,180.1 L634.3,164.8 L634.6,150.4 L634.8,164.8 L635.6,180.1 L649.8,180.1 L650.8,178.7 L652.4,178.7 L653.4,180.1 L659.7,180.1 L660.8,172.7 L661.8,162.2 L662.9,154.4 L663.7,160.7 L664.4,160.1 L665.2,170.1 L666.0,175.3 L667.6,176.1 L668.6,176.6 L669.9,179.3 L670.7,180.1 L674.4,180.1 L675.5,175.3 L676.2,170.1 L677.0,171.1 L677.8,173.2 L678.6,178.5 L679.1,180.1 L679.9,180.1 L680.7,173.2 L681.9,175.3 L683.1,167.5 L683.6,163.0 L684.4,172.7 L684.9,176.9 L685.7,175.9 L686.2,175.3 L687.0,179.3 L687.5,180.1 L698.8,180.1 L699.6,195.0 L700.4,180.1 L704.5,180.1 L705.3,179.0 L706.1,180.1 L724.7,180.1 L725.6,170.6 L726.6,180.1 L738.1,180.1 L739.1,170.1 L739.9,159.6 L740.5,154.9 L741.2,164.8 L742.0,173.2 L743.1,167.5 L744.1,164.3 L744.9,167.5 L745.7,176.6 L746.7,178.5 L747.8,178.0 L748.8,179.5 L749.9,180.1 L752.5,180.1 L753.8,177.4 L755.1,179.3 L756.7,180.1 L759.9,180.1 L761.4,179.3 L763.0,178.5 L764.0,174.0 L765.6,174.5 L767.7,175.3 L769.8,175.9 L770.6,180.1 L774.0,180.1 L774.9,176.1 L775.8,180.1 L789.7,180.1 L790.5,180.1 L795.7,180.1 L796.8,177.4 L797.8,180.1 L806.0,180.1 L806.7,171.4 L807.3,170.1 L807.8,180.1 L826.9,180.1 L828.0,160.9 L829.0,180.1 L833.7,180.1 L834.5,178.5 L835.3,180.1 L843.4,180.1 L844.5,177.4 L845.5,180.1 L880.9,180.1 L882.0,160.9 L883.0,180.1 L897.7,180.1 L898.7,162.8 L899.8,180.1 L912.9,180.1 L913.9,177.2 L915.0,180.1 L925.0,180.1 L926.0,176.1 L927.1,180.1 L972.9,180.1 L973.7,170.1 L974.5,166.9 L975.5,168.0 L976.6,169.6 L977.6,173.2 L978.4,175.3 L979.2,174.3 L980.0,173.2 L981.0,174.8 L981.8,175.3 L982.6,173.8 L983.1,173.2 L984.9,173.2 L985.5,180.1 L992.0,180.1 L993.1,178.0 L993.6,177.4 L994.6,179.3 L995.4,173.2 L996.0,172.7 L996.7,176.6 L997.8,176.4 L998.8,177.4 L999.9,180.1 L1008.3,180.1 L1009.3,178.2 L1010.6,178.2 L1011.7,180.1 L1019.5,180.1 L1020.6,168.0 L1021.6,180.1 L1023.5,180.1 L1024.4,173.2 L1025.3,180.1 L1033.4,180.1 L1034.5,163.0 L1035.5,180.1 L1050.7,180.1 L1051.8,172.7 L1052.8,164.8 L1054.4,160.9 L1055.5,164.8 L1056.2,170.1 L1057.3,175.3 L1058.3,178.5 L1059.6,180.1 L1066.5,180.1 L1068.0,178.0 L1070.1,174.8 L1071.7,177.4 L1073.3,179.5 L1074.3,180.1 L1080.9,180.1 L1081.9,170.6 L1083.0,180.1 L1084.5,180.1 L1085.5,173.2 L1086.9,79.7 L1088.0,180.1 L1097.9,180.1 L1099.0,173.2 L1100.0,180.1 L1103.9,180.1 L1105.0,178.7 L1106.0,180.1 L1116.8,180.1 L1118.1,178.5 L1119.1,180.1 L1126.7,180.1 L1128.1,175.3 L1129.4,166.9 L1130.4,164.8 L1130.9,163.5 L1131.7,166.2 L1132.5,160.1 L1133.0,167.5 L1133.6,171.4 L1134.6,173.2 L1135.1,174.3 L1136.2,178.5 L1137.2,180.1 L1138.8,180.1 L1139.9,175.3 L1140.6,172.2 L1141.7,174.8 L1142.5,176.9 L1143.5,178.7 L1144.6,179.5 L1153.5,179.5" fill="none" stroke="#3ab262" stroke-width="0.72" stroke-linejoin="round"/>
  <path d="M607.3,67.9V206.8" stroke="#2f9e55" stroke-width="0.8"/>

  <!-- MEMBERS -->
  <path d="M411.3,253.6H766.6" stroke="#25503a" stroke-width="0.6" stroke-dasharray="1.2 0.8"/>
  <path d="M411.3,363.7 L414.0,363.7 L414.0,379.2 L447.3,379.2 L447.3,285.1 L448.6,285.1 L448.6,316.0 L449.4,316.0 L449.4,337.0 L450.4,337.0 L450.4,359.3 L451.5,359.3 L451.5,363.2 L452.5,363.2 L452.5,368.4 L453.6,368.4 L453.6,379.2 L454.1,379.2 L454.1,368.4 L455.6,368.4 L455.6,348.0 L457.5,348.0 L457.5,353.2 L458.3,353.2 L458.3,379.2 L459.3,379.2 L459.3,368.4 L460.4,368.4 L460.4,363.2 L461.7,363.2 L461.7,373.7 L462.5,373.7 L462.5,363.2 L464.0,363.2 L464.0,379.2 L497.6,379.2 L497.6,300.8 L498.4,300.8 L498.4,269.4 L499.7,269.4 L499.7,316.0 L501.3,316.0 L501.3,322.6 L501.8,322.6 L501.8,342.2 L502.6,342.2 L502.6,363.2 L503.6,363.2 L503.6,368.4 L504.7,368.4 L504.7,379.2 L506.0,379.2 L506.0,368.4 L507.3,368.4 L507.3,363.2 L508.6,363.2 L508.6,379.2 L513.1,379.2 L513.1,363.2 L517.8,363.2 L517.8,379.2 L650.2,379.2 L650.2,311.3 L651.8,311.3 L651.8,326.5 L652.6,326.5 L652.6,331.7 L653.7,331.7 L653.7,337.5 L654.7,337.5 L654.7,342.8 L655.5,342.8 L655.5,348.0 L656.3,348.0 L656.3,353.2 L657.3,353.2 L657.3,379.2 L663.9,379.2 L663.9,369.0 L667.0,369.0 L667.0,379.2 L672.8,379.2 L672.8,369.0 L674.6,369.0 L674.6,379.2 L700.6,379.2 L700.6,316.5 L701.4,316.5 L701.4,306.1 L703.2,306.1 L703.2,316.5 L703.7,316.5 L703.7,337.5 L704.5,337.5 L704.5,369.0 L705.3,369.0 L705.3,379.2 L711.1,379.2 L711.1,369.0 L712.6,369.0 L712.6,363.7 L713.4,363.7 L713.4,358.5 L714.7,358.5 L714.7,369.0 L716.3,369.0 L716.3,379.2 L751.4,379.2 L751.4,342.8 L752.0,342.8 L752.0,316.5 L752.5,316.5 L752.5,311.3 L753.5,311.3 L753.5,331.7 L754.8,331.7 L754.8,358.5 L755.9,358.5 L755.9,369.0 L756.9,369.0 L756.9,379.2 L758.0,379.2 L758.0,353.2 L759.6,353.2 L759.6,369.0 L760.9,369.0 L760.9,379.2 L766.6,379.2 L766.6,379.2 L766.6,379.2 L411.3,379.2 Z" fill="url(#gfill2)"/>
  <path d="M411.3,363.7 L414.0,363.7 L414.0,379.2 L447.3,379.2 L447.3,285.1 L448.6,285.1 L448.6,316.0 L449.4,316.0 L449.4,337.0 L450.4,337.0 L450.4,359.3 L451.5,359.3 L451.5,363.2 L452.5,363.2 L452.5,368.4 L453.6,368.4 L453.6,379.2 L454.1,379.2 L454.1,368.4 L455.6,368.4 L455.6,348.0 L457.5,348.0 L457.5,353.2 L458.3,353.2 L458.3,379.2 L459.3,379.2 L459.3,368.4 L460.4,368.4 L460.4,363.2 L461.7,363.2 L461.7,373.7 L462.5,373.7 L462.5,363.2 L464.0,363.2 L464.0,379.2 L497.6,379.2 L497.6,300.8 L498.4,300.8 L498.4,269.4 L499.7,269.4 L499.7,316.0 L501.3,316.0 L501.3,322.6 L501.8,322.6 L501.8,342.2 L502.6,342.2 L502.6,363.2 L503.6,363.2 L503.6,368.4 L504.7,368.4 L504.7,379.2 L506.0,379.2 L506.0,368.4 L507.3,368.4 L507.3,363.2 L508.6,363.2 L508.6,379.2 L513.1,379.2 L513.1,363.2 L517.8,363.2 L517.8,379.2 L650.2,379.2 L650.2,311.3 L651.8,311.3 L651.8,326.5 L652.6,326.5 L652.6,331.7 L653.7,331.7 L653.7,337.5 L654.7,337.5 L654.7,342.8 L655.5,342.8 L655.5,348.0 L656.3,348.0 L656.3,353.2 L657.3,353.2 L657.3,379.2 L663.9,379.2 L663.9,369.0 L667.0,369.0 L667.0,379.2 L672.8,379.2 L672.8,369.0 L674.6,369.0 L674.6,379.2 L700.6,379.2 L700.6,316.5 L701.4,316.5 L701.4,306.1 L703.2,306.1 L703.2,316.5 L703.7,316.5 L703.7,337.5 L704.5,337.5 L704.5,369.0 L705.3,369.0 L705.3,379.2 L711.1,379.2 L711.1,369.0 L712.6,369.0 L712.6,363.7 L713.4,363.7 L713.4,358.5 L714.7,358.5 L714.7,369.0 L716.3,369.0 L716.3,379.2 L751.4,379.2 L751.4,342.8 L752.0,342.8 L752.0,316.5 L752.5,316.5 L752.5,311.3 L753.5,311.3 L753.5,331.7 L754.8,331.7 L754.8,358.5 L755.9,358.5 L755.9,369.0 L756.9,369.0 L756.9,379.2 L758.0,379.2 L758.0,353.2 L759.6,353.2 L759.6,369.0 L760.9,369.0 L760.9,379.2 L766.6,379.2 L766.6,379.2" fill="none" stroke="#35a95b" stroke-width="0.8" stroke-linejoin="miter"/>
  <path d="M411.3,253.6V379.6" stroke="#2f9e55" stroke-width="0.8"/>
  <circle cx="411.9" cy="363.6" r="2.3" fill="#3fc06a"/>
  <path d="M409.5,274.9h1.6M409.5,301.1h1.6M409.5,327.2h1.6M409.5,353.4h1.6M409.5,379.5h1.6" stroke="#1f5f3a" stroke-width="0.6"/>

  <!-- STRESS -->
  <path d="M26.9,555.3 L27.4,550.6 L28.1,552.1 L28.9,550.1 L29.9,551.1 L30.6,553.6 L31.6,555.1 L32.3,556.1 L33.1,555.8 L33.8,555.9 L34.6,556.2 L35.3,556.5 L36.1,555.9 L36.8,555.9 L37.6,556.0 L38.3,556.6 L39.1,555.9 L39.8,556.6 L40.6,556.5 L41.3,555.9 L42.1,556.3 L42.8,556.2 L43.5,556.2 L44.3,556.8 L45.0,555.9 L45.8,555.8 L46.5,556.8 L47.3,556.2 L48.0,556.0 L48.8,556.1 L49.5,556.2 L50.3,556.8 L51.0,556.0 L51.8,556.0 L52.5,556.4 L53.3,556.4 L54.0,556.8 L54.8,556.7 L55.5,556.1 L56.3,556.0 L57.0,556.7 L57.8,556.8 L58.5,555.8 L59.3,556.6 L60.0,556.7 L60.7,556.5 L61.5,556.0 L62.2,556.6 L63.0,556.6 L63.7,556.0 L64.5,556.5 L65.2,556.0 L66.0,555.8 L66.7,556.1 L67.5,556.1 L68.2,556.2 L69.0,556.5 L69.7,556.7 L70.5,556.8 L71.2,556.8 L72.0,556.8 L72.7,556.6 L73.5,556.1 L74.2,555.9 L75.0,556.4 L75.7,556.4 L76.5,556.5 L77.2,555.9 L77.9,556.0 L78.7,556.8 L79.4,556.4 L80.2,556.5 L80.9,555.9 L81.7,556.2 L82.4,556.8 L83.2,556.5 L83.9,556.8 L84.7,556.0 L85.4,556.3 L86.2,556.6 L86.9,556.2 L87.4,555.3 L88.2,502.5 L88.9,555.3 L89.7,555.8 L90.4,556.0 L91.1,556.1 L91.9,556.7 L92.6,556.3 L93.4,556.5 L94.1,555.9 L94.9,556.3 L95.6,556.7 L96.4,556.3 L97.1,556.8 L97.9,556.7 L98.6,556.2 L99.4,555.8 L100.1,556.6 L100.9,555.9 L101.6,555.8 L102.4,556.6 L103.1,556.7 L103.9,556.7 L104.6,556.8 L105.4,556.0 L106.1,555.8 L106.9,555.9 L107.6,556.8 L108.4,555.9 L109.1,555.9 L109.9,555.8 L110.6,555.8 L111.4,555.8 L112.1,556.1 L112.8,555.9 L113.6,556.1 L114.3,556.8 L115.1,555.9 L115.8,556.6 L116.6,556.6 L117.3,556.4 L118.1,556.4 L118.8,556.6 L119.6,556.4 L120.3,556.0 L121.1,556.1 L121.8,556.0 L122.6,556.2 L123.3,556.8 L124.1,556.2 L124.8,555.8 L125.6,556.3 L126.3,556.6 L127.1,556.2 L127.8,556.5 L128.6,555.9 L129.3,555.8 L130.1,556.5 L130.8,555.8 L131.6,556.1 L132.3,556.2 L133.1,556.0 L133.8,555.8 L134.6,555.8 L135.3,556.8 L136.0,556.5 L136.8,556.8 L137.5,556.3 L138.5,546.6 L139.5,542.9 L140.8,529.3 L141.8,513.1 L142.5,515.6 L143.3,524.3 L144.0,520.6 L144.7,526.8 L145.5,525.5 L146.2,531.7 L147.0,544.1 L148.0,549.1 L149.5,551.1 L151.4,550.3 L153.9,552.1 L156.4,553.6 L158.9,555.3 L162.6,556.6 L166.3,555.3 L168.3,549.1 L169.3,542.9 L170.3,539.2 L171.3,545.4 L172.0,549.1 L172.5,497.0 L173.3,549.1 L174.3,555.3 L176.7,555.3 L178.7,552.8 L181.2,551.6 L183.2,551.1 L184.7,549.1 L185.7,551.6 L186.2,546.6 L186.7,504.4 L187.2,452.3 L187.7,504.4 L188.2,549.1 L189.2,552.8 L190.1,551.6 L190.9,540.4 L191.6,551.6 L192.6,550.3 L193.6,555.3 L194.4,556.4 L195.1,556.4 L195.9,556.6 L196.6,556.1 L197.3,556.5 L198.1,556.7 L198.8,556.7 L199.6,556.0 L200.3,556.5 L201.1,556.4 L201.8,556.3 L202.6,556.8 L203.3,556.3 L204.0,556.2 L204.8,556.8 L205.5,556.5 L206.3,556.1 L207.0,556.1 L207.8,556.3 L208.5,555.8 L209.3,556.4 L210.0,556.6 L210.9,556.3 L211.7,556.4 L212.4,556.7 L213.2,556.7 L213.9,556.7 L214.7,556.2 L215.4,556.8 L216.2,556.2 L216.9,556.1 L217.7,555.9 L218.4,556.3 L219.2,555.9 L219.9,556.1 L220.7,556.4 L221.4,556.6 L222.2,556.6 L223.0,555.9 L223.7,555.8 L224.5,556.0 L225.2,556.4 L226.0,556.7 L226.7,556.6 L227.5,556.8 L228.2,556.4 L229.0,556.5 L229.7,556.1 L230.5,556.1 L231.2,556.0 L232.0,556.3 L232.7,556.4 L233.5,556.4 L234.2,556.2 L235.0,556.2 L235.5,555.6 L236.2,537.2 L237.0,555.6 L237.7,556.4 L238.5,556.6 L239.2,556.6 L240.0,556.7 L240.7,556.1 L241.5,556.8 L242.2,556.4 L243.0,556.6 L243.7,556.6 L244.5,556.8 L245.2,556.1 L246.0,556.2 L246.7,556.5 L247.5,556.4 L248.2,556.6 L249.0,556.2 L249.7,556.8 L250.5,555.8 L251.2,556.5 L252.0,556.2 L252.7,555.8 L253.5,556.5 L254.2,555.8 L255.0,556.0 L255.7,556.1 L256.5,555.9 L257.2,555.9 L258.0,555.8 L258.7,556.7 L259.5,555.8 L260.2,555.9 L261.0,555.8 L261.7,556.7 L262.5,556.4 L263.2,556.7 L264.0,556.8 L264.7,556.3 L265.5,556.2 L266.2,556.2 L267.0,556.0 L267.7,556.4 L268.5,556.8 L269.2,556.3 L270.0,556.6 L270.7,556.7 L271.5,556.7 L272.2,556.5 L273.0,556.4 L273.7,555.9 L274.5,556.2 L275.2,556.7 L276.0,556.2 L276.7,556.5 L277.5,556.0 L278.2,556.4 L279.0,556.0 L279.7,556.6 L280.5,556.6 L281.2,555.8 L282.0,556.5 L282.7,555.9 L283.5,556.8 L284.3,555.9 L285.0,555.9 L285.8,556.7 L286.5,556.4 L287.3,555.8 L288.0,556.3 L288.8,556.7 L289.5,555.9 L290.3,556.6 L291.0,556.1 L291.8,556.2 L292.5,556.2 L293.3,555.8 L294.0,556.2 L294.8,556.3 L295.5,556.4 L296.3,556.3 L297.0,555.9 L297.8,556.4 L298.5,556.1 L299.3,556.1 L300.2,539.2 L301.2,516.8 L302.0,508.9 L302.7,519.3 L303.7,536.7 L304.5,546.6 L305.2,540.4 L306.2,544.1 L306.9,550.3 L307.7,541.7 L308.7,542.9 L309.7,540.4 L311.2,539.2 L312.2,539.2 L312.9,549.1 L313.6,555.3 L316.6,556.1 L317.6,552.8 L318.6,556.1 L319.4,556.1 L320.1,556.8 L320.9,556.8 L321.7,556.8 L322.5,556.6 L323.2,556.7 L324.0,555.8 L324.8,556.4 L325.6,556.0 L326.6,554.8 L329.0,556.1 L333.0,553.6 L334.0,556.1 L334.7,556.5 L335.5,555.9 L336.3,556.4 L337.0,556.7 L337.8,556.7 L338.5,556.3 L339.3,556.4 L340.1,556.2 L340.8,556.3 L341.6,555.9 L342.3,556.5 L343.1,556.4 L343.8,556.1 L344.6,556.2 L345.4,556.6 L346.1,556.2 L346.9,556.8 L347.6,556.8 L348.4,556.1 L349.9,552.1 L351.4,549.6 L352.9,551.6 L354.3,550.3 L356.3,551.1 L358.8,552.1 L361.3,551.6 L362.8,552.1 L363.8,556.1 L364.5,556.5 L365.3,556.2 L366.0,556.5 L366.8,555.8 L367.5,556.5 L368.3,556.2 L369.0,556.4 L369.8,555.9 L370.6,556.1 L371.3,556.0 L372.1,556.1 L372.8,556.6 L373.6,556.3 L374.3,556.8 L375.1,556.4 L375.8,556.0 L376.6,556.4 L377.4,556.3 L378.1,555.9 L378.9,556.3 L379.6,555.8 L380.4,556.2 L381.1,556.3 L381.9,556.5 L382.4,555.6 L383.1,536.2 L383.9,555.6 L384.6,556.0 L385.4,556.2 L386.2,556.0 L386.9,556.2 L387.7,556.4 L388.5,556.5 L389.3,556.0 L390.1,556.1 L390.8,556.0 L391.6,556.6 L392.4,556.1 L393.2,556.7 L393.9,555.8 L394.7,555.8 L395.5,556.2 L396.3,556.2 L396.8,555.6 L397.5,516.8 L398.3,555.6 L399.9,556.3 L400.7,556.7 L401.4,555.8 L402.2,556.1 L402.9,556.8 L403.7,556.5 L404.4,555.9 L405.2,556.1 L405.9,556.7 L406.7,556.2 L407.4,555.8 L408.2,556.7 L408.9,555.9 L409.7,556.5 L410.4,556.4 L411.2,556.3 L411.9,556.8 L412.7,555.9 L413.4,556.4 L414.2,555.9 L414.9,556.8 L415.7,555.9 L416.4,556.3 L417.2,556.7 L417.9,556.7 L418.7,555.9 L419.4,556.7 L420.2,556.7 L420.9,556.1 L421.7,556.6 L422.4,556.0 L423.2,555.9 L423.9,555.9 L424.7,556.1 L425.4,556.7 L426.2,556.3 L426.9,556.8 L427.7,556.7 L428.4,556.0 L429.2,556.2 L429.9,555.8 L430.7,556.4 L431.4,556.4 L432.2,556.4 L432.9,555.9 L433.7,556.4 L434.4,555.9 L435.2,556.7 L435.9,556.3 L436.7,555.9 L437.4,556.8 L438.2,556.8 L438.9,556.1 L439.7,556.8 L440.4,556.1 L441.2,556.3 L441.9,556.4 L442.7,556.6 L443.4,555.8 L444.2,555.8 L444.9,555.9 L445.7,556.2 L446.4,556.6 L447.2,556.5 L447.9,555.9 L448.7,556.6 L449.4,556.0 L450.2,555.8 L450.9,556.3 L451.7,556.8 L452.4,556.7 L453.2,556.2 L453.9,556.6 L454.7,556.0 L455.4,555.9 L456.2,556.8 L456.9,556.5 L457.7,555.9 L458.4,556.1 L459.2,556.6 L459.9,555.8 L460.7,556.0 L461.4,556.6 L462.2,556.0 L462.9,556.2 L463.7,556.2 L464.4,556.3 L465.2,556.1 L465.9,556.0 L466.7,556.6 L467.2,555.6 L467.9,508.9 L468.9,555.6 L469.7,556.2 L470.4,556.0 L471.1,555.9 L471.9,556.8 L472.6,556.4 L473.4,556.5 L474.1,556.4 L474.9,556.2 L475.6,556.6 L476.4,556.4 L477.1,556.6 L477.9,556.5 L478.6,556.7 L479.4,556.2 L480.1,555.9 L480.9,555.9 L481.6,556.5 L482.4,555.9 L483.1,556.5 L483.9,556.4 L484.6,555.8 L485.4,556.6 L486.1,555.8 L486.8,556.7 L487.6,556.7 L488.3,556.0 L489.1,556.5 L489.8,556.6 L490.6,555.9 L491.3,556.5 L492.1,555.9 L492.8,556.8 L493.6,556.5 L494.3,556.8 L495.1,555.8 L495.8,556.1 L496.6,556.4 L497.3,556.4 L498.1,556.0 L498.8,556.7 L499.6,556.7 L500.3,556.1 L501.0,555.9 L501.8,556.5 L502.5,556.2 L503.3,556.5 L504.0,556.3 L504.8,556.2 L505.5,555.8 L506.3,555.9 L507.0,556.3 L507.8,556.6 L508.5,556.2 L509.3,556.6 L510.0,556.3 L510.8,556.7 L511.5,556.5 L512.3,556.1 L513.0,555.9 L513.8,555.8 L514.5,555.8 L515.3,556.7 L516.0,556.7 L516.7,556.6 L517.5,555.9 L518.2,556.5 L519.0,555.9 L519.7,556.7 L520.5,556.5 L521.2,556.6 L522.0,556.4 L522.7,556.2 L523.5,556.7 L524.2,556.8 L525.0,556.0 L525.7,556.2 L526.5,556.6 L527.2,556.5 L528.0,556.2 L528.7,556.2 L529.5,556.8 L530.2,556.1 L531.0,556.0 L531.7,556.5 L532.4,556.1 L533.2,556.7 L533.9,556.1 L534.7,556.8 L535.4,556.2 L536.2,556.7 L536.9,556.6 L537.7,556.6 L538.4,556.0 L539.2,555.9 L539.9,555.8 L540.7,556.0 L541.4,556.5 L542.2,555.8 L542.9,556.0 L543.7,556.4 L544.4,555.9 L545.2,556.1 L545.9,556.0 L546.6,556.5 L547.4,555.9 L548.1,556.8 L548.9,556.4 L549.6,556.5 L550.4,556.4 L551.1,556.3 L551.9,556.8 L552.6,556.7 L553.4,556.7 L554.1,555.8 L554.9,556.4 L555.6,556.8 L556.4,556.5 L557.1,556.3 L557.9,556.5 L558.6,556.0 L559.4,556.6 L560.1,556.6 L560.9,555.8 L561.6,556.3 L562.3,556.4 L563.1,556.1 L563.8,556.5 L564.6,556.8 L565.3,556.7 L566.1,556.1 L566.8,555.9 L567.6,556.7 L568.3,556.4 L569.1,556.7 L569.8,556.7 L570.6,556.1 L571.3,556.4 L572.1,556.1 L572.8,556.6 L573.6,556.5 L574.3,556.0 L575.1,556.3 L575.8,556.4 L576.6,556.0 L577.3,556.0 L578.0,556.3 L578.8,555.8 L579.5,556.3 L580.3,556.8 L581.0,556.7 L581.8,555.8 L582.5,556.7 L583.3,556.5 L584.0,556.5 L584.8,555.8 L585.5,556.6 L586.3,556.0 L587.0,556.6 L587.8,556.1 L588.5,556.2 L592.4,556.5 L593.2,555.8 L593.9,556.1 L594.7,556.0 L595.4,556.6 L596.2,556.5 L596.9,556.7 L597.7,555.9 L598.4,556.2 L599.2,555.8 L599.9,556.0 L600.7,556.3 L601.4,555.8 L602.2,556.0 L603.0,556.5 L603.7,556.4 L604.5,556.0 L605.2,556.4 L606.0,556.6 L606.7,555.8 L607.5,556.6 L608.2,556.5 L609.0,556.1 L609.7,555.9 L610.5,556.8 L611.2,556.1 L612.0,555.9 L612.7,555.9 L613.5,556.7 L614.0,555.6 L615.0,508.2 L616.0,555.6 L616.7,555.8 L617.5,556.5 L618.2,555.9 L619.0,556.3 L619.7,556.5 L620.4,556.6 L621.2,556.3 L621.9,556.3 L622.7,555.8 L623.4,556.2 L624.2,556.2 L624.9,556.7 L625.7,556.4 L626.4,556.6 L627.1,556.2 L627.9,555.9 L628.6,556.7 L629.4,556.7 L630.1,556.2 L630.9,555.9 L631.6,556.3 L632.4,556.3 L633.1,556.6 L633.8,556.4 L634.6,556.3 L635.3,556.4 L636.1,556.2 L636.8,555.8 L637.6,555.8 L638.3,556.8 L639.1,556.7 L639.8,556.1 L640.5,556.7 L641.3,556.3 L642.0,555.9 L642.8,556.7 L643.5,556.4 L644.3,556.8 L645.0,556.5 L645.8,555.9 L646.5,556.4 L647.2,556.6 L648.0,556.7 L648.7,556.1 L649.5,556.3 L650.2,556.5 L651.0,555.9 L651.7,556.7 L652.5,556.6 L653.2,555.8 L653.9,556.4 L654.7,556.2 L655.4,556.0 L656.2,556.4 L656.9,556.8 L657.7,556.4 L658.4,555.9 L659.2,556.3 L659.9,556.6 L660.6,556.8 L661.4,556.5 L662.1,555.8 L662.9,555.6 L663.6,523.1 L664.6,555.6 L665.4,556.2 L666.1,556.3 L666.9,556.7 L667.6,555.9 L668.4,556.0 L669.1,555.8 L669.9,555.9 L670.6,555.8 L671.4,555.9 L672.1,556.3 L672.8,556.8 L673.6,556.5 L674.3,556.2 L675.1,556.2 L675.8,556.5 L676.6,556.1 L677.3,555.8 L678.1,556.7 L678.8,556.4 L679.6,555.9 L680.3,555.8 L681.1,555.9 L681.8,556.8 L682.6,555.9 L683.3,556.4 L684.1,556.8 L684.8,555.8 L685.6,556.2 L686.3,556.3 L687.1,556.8 L687.8,556.0 L688.6,556.0 L689.3,556.0 L690.1,555.8 L690.8,556.5 L691.6,556.6 L692.3,556.2 L693.1,555.8 L693.8,556.5 L694.6,556.6 L695.3,556.5 L696.1,556.1 L696.8,556.7 L697.6,556.4 L698.3,556.4 L699.1,556.3 L699.8,556.0 L700.6,556.3 L701.3,556.6 L702.1,556.5 L702.8,556.1 L703.6,556.7 L704.3,556.7 L705.1,555.8 L705.8,555.9 L706.6,556.0 L707.3,555.8 L708.1,556.6 L708.8,556.5 L709.6,556.3 L710.3,556.8 L711.0,556.1 L711.8,556.0 L712.5,555.9 L713.3,556.1 L714.0,556.7 L714.8,556.4 L715.5,555.8 L716.3,556.2 L717.0,555.8 L717.8,556.4 L718.5,555.9 L719.3,556.0 L720.0,556.5 L720.8,556.7 L721.5,556.4 L722.3,556.1 L723.0,556.5 L723.8,556.1 L724.5,555.8 L725.3,556.1 L726.0,556.5 L726.8,556.4 L727.5,556.0 L728.3,556.7 L729.0,556.7 L729.8,556.1 L730.5,556.8 L731.3,556.0 L732.0,555.8 L732.8,556.3 L733.5,556.7 L734.3,556.4 L735.0,556.4 L735.8,556.3 L736.5,556.1 L737.3,556.1 L738.0,556.2 L738.8,556.4 L739.5,556.8 L740.3,555.8 L741.0,556.0 L741.8,556.8 L742.5,556.5 L743.3,555.8 L744.0,556.2 L744.8,556.5 L745.5,556.8 L746.3,555.8 L747.0,555.6 L747.7,531.0 L748.7,555.6 L749.5,556.1 L750.2,556.3 L751.0,555.8 L751.7,556.1 L752.5,555.8 L753.2,555.8 L753.9,556.1 L754.7,555.9 L755.4,556.1 L756.2,556.6 L756.9,555.8 L757.7,556.4 L758.4,555.9 L759.2,556.6 L759.9,556.6 L760.6,556.0 L761.4,556.7 L762.1,556.5 L762.9,555.8 L763.6,556.2 L764.4,556.5 L765.1,556.8 L765.9,555.9 L766.6,556.0 L767.3,556.6 L768.1,556.8 L768.8,555.9 L769.6,555.9 L770.3,556.6 L771.1,556.1 L771.8,556.2 L772.6,556.7 L773.3,556.6 L774.0,556.5 L774.8,556.7 L775.5,556.6 L776.3,556.6 L777.0,556.5 L777.8,556.4 L778.5,555.8 L781.9,556.1 L783.4,549.1 L784.9,541.2 L786.4,542.9 L787.4,541.2 L788.9,544.1 L790.3,543.6 L791.8,550.3 L793.3,548.6 L794.8,551.6 L796.3,547.9 L797.8,546.1 L799.3,551.6 L800.8,548.6 L802.3,552.8 L803.3,547.9 L804.7,552.1 L806.2,551.1 L807.7,555.3 L809.7,556.6 L814.7,556.6 L815.7,554.1 L816.7,556.6 L822.6,556.6 L823.3,551.1 L824.1,556.6 L828.1,556.1 L829.1,551.6 L830.5,553.1 L832.5,553.6 L834.5,553.1 L836.0,553.6 L837.0,556.6 L837.7,556.7 L838.5,556.2 L839.3,556.4 L840.0,556.7 L840.8,556.0 L841.5,556.3 L842.3,556.4 L843.0,556.8 L843.8,555.8 L844.5,555.8 L845.3,556.1 L846.1,556.7 L846.8,556.7 L847.6,555.9 L848.3,556.8 L849.1,556.3 L849.8,556.8 L850.6,556.8 L851.4,555.9 L852.1,556.8 L852.9,556.3 L853.6,555.9 L854.4,556.1 L856.8,554.8 L859.3,554.8 L860.8,556.6 L861.6,556.1 L862.3,556.2 L863.1,556.3 L863.8,556.1 L864.5,556.3 L865.3,556.2 L866.0,555.8 L866.8,556.2 L867.5,555.8 L868.3,555.9 L869.0,556.0 L869.8,556.8 L870.5,556.3 L871.2,556.4 L872.0,556.8 L872.7,556.7 L873.5,556.4 L874.2,556.0 L875.0,556.3 L875.7,556.1 L876.5,556.8 L877.2,555.8 L877.9,556.2 L878.7,556.5 L879.4,556.4 L880.2,556.4 L880.9,556.6 L881.7,556.0 L882.4,556.7 L883.2,556.8 L883.9,555.8 L884.6,556.1 L885.4,556.2 L886.1,556.2 L886.9,556.3 L887.6,556.0 L888.4,556.5 L889.1,556.7 L889.9,556.8 L890.6,556.7 L891.3,556.0 L892.1,556.6 L892.8,556.6 L893.6,556.4 L894.3,556.5 L895.1,556.1 L895.8,556.6 L896.6,556.0 L897.3,556.4 L898.0,556.1 L898.8,554.6 L899.5,556.6 L902.3,556.6 L903.0,554.1 L904.0,556.6 L904.7,556.4 L905.5,555.9 L906.2,556.5 L907.0,556.1 L907.7,556.8 L908.5,556.0 L909.2,556.6 L910.0,555.9 L910.7,556.8 L911.4,556.7 L912.2,555.9 L912.9,556.5 L913.7,556.0 L914.4,556.3 L915.2,555.3 L916.4,556.6 L917.1,555.8 L917.9,556.2 L918.7,555.9 L919.4,556.6 L920.2,556.3 L920.9,555.8 L921.7,555.8 L922.5,556.6 L923.2,555.9 L924.0,556.6 L924.7,556.4 L925.5,556.3 L926.3,556.7 L927.0,556.4 L927.8,556.4 L928.5,556.2 L929.3,556.0 L930.0,555.9 L930.8,556.2 L931.6,556.2 L932.3,556.6 L933.1,556.0 L933.8,556.2 L934.6,556.8 L935.4,556.4 L936.1,556.5 L936.9,556.5 L937.6,556.8 L938.4,556.0 L939.2,556.6 L939.9,555.8 L940.7,556.0 L941.4,556.4 L942.2,556.1 L943.0,556.3 L943.7,556.1 L944.9,546.6 L946.2,540.4 L947.4,537.9 L948.4,531.7 L949.4,526.3 L950.4,534.2 L951.4,540.4 L952.4,534.7 L953.1,542.9 L954.1,546.6 L955.4,550.3 L956.6,555.3 L958.6,556.6 L959.3,556.3 L960.1,556.0 L960.9,556.5 L961.6,556.0 L962.4,556.3 L963.2,556.8 L963.9,555.8 L964.7,556.1 L965.5,556.5 L966.2,555.8 L967.0,555.9 L967.7,556.7 L968.5,556.8 L968.9,556.0 L969.7,556.3 L970.5,555.9 L971.3,556.7 L972.1,556.0 L972.9,556.4 L973.7,556.8 L974.5,556.2 L975.3,556.8 L976.1,556.6 L976.9,556.1 L978.4,552.8 L979.9,553.6 L981.8,550.6 L983.8,551.1 L985.3,552.1 L986.3,556.1 L987.8,555.6 L988.8,552.1 L989.8,556.1 L990.5,556.8 L991.3,555.8 L992.0,556.5 L992.8,556.3 L993.5,556.8 L994.3,556.2 L995.0,556.8 L995.8,555.9 L996.5,556.8 L997.3,556.2 L998.0,556.0 L998.8,556.1 L999.5,556.4 L1000.3,555.8 L1001.0,556.2 L1001.8,555.8 L1002.5,555.8 L1003.3,555.9 L1004.0,556.0 L1004.8,556.1 L1005.5,556.6 L1006.3,556.2 L1007.0,556.7 L1007.8,556.7 L1008.5,556.7 L1009.3,556.8 L1010.0,556.4 L1010.8,556.5 L1011.5,556.7 L1012.3,556.4 L1013.0,555.9 L1013.8,556.3 L1014.5,556.3 L1015.3,556.0 L1016.0,555.9 L1016.8,556.0 L1017.5,556.5 L1018.3,556.6 L1019.0,556.5 L1019.8,556.2 L1020.5,555.8 L1021.3,555.8 L1022.0,556.5 L1022.8,556.3 L1023.5,556.3 L1024.3,555.9 L1025.0,555.9 L1025.8,556.0 L1026.5,555.9 L1027.3,556.4 L1028.0,556.1 L1028.8,556.4 L1029.5,556.2 L1030.3,556.4 L1031.0,556.6 L1031.8,556.6 L1032.5,555.9 L1033.3,556.8 L1034.0,556.7 L1034.8,556.7 L1035.5,556.3 L1036.3,556.8 L1037.0,556.6 L1037.8,556.0 L1038.5,556.5 L1039.3,556.7 L1040.0,556.6 L1040.8,556.7 L1041.5,556.3 L1042.3,556.5 L1043.0,555.8 L1043.8,556.5 L1044.5,555.9 L1045.3,556.5 L1046.0,556.7 L1046.8,556.2 L1047.5,555.8 L1048.3,555.8 L1049.0,556.3 L1049.8,555.9 L1050.5,556.6 L1051.3,556.4 L1052.0,556.3 L1052.8,556.5 L1053.5,555.9 L1054.0,555.6 L1054.8,551.6 L1055.5,555.6 L1056.3,556.4 L1057.0,556.7 L1057.8,556.3 L1058.5,556.5 L1059.3,556.8 L1060.0,556.3 L1060.8,556.6 L1061.5,556.6 L1062.3,556.7 L1063.0,555.8 L1063.8,555.9 L1064.5,556.8 L1065.3,556.6 L1066.0,556.0 L1066.8,556.6 L1067.5,555.9 L1068.3,556.2 L1069.0,556.2 L1069.8,556.0 L1070.5,555.9 L1071.3,556.3 L1072.0,556.5 L1072.8,556.1 L1073.5,556.5 L1074.3,556.8 L1075.0,555.8 L1075.7,556.1 L1076.5,555.9 L1077.2,556.5 L1078.0,556.2 L1078.7,556.2 L1079.5,556.0 L1080.2,556.6 L1081.0,556.6 L1081.7,556.2 L1082.5,556.7 L1083.2,556.0 L1084.0,556.1 L1084.7,556.8 L1085.5,556.0 L1086.2,555.9 L1087.0,555.8 L1087.7,556.5 L1088.5,556.7 L1089.2,555.8 L1090.0,556.3 L1090.7,556.2 L1091.5,556.1 L1092.2,556.0 L1093.0,556.2 L1093.7,555.9 L1094.5,556.8 L1095.2,556.0 L1096.0,556.3 L1096.7,556.5 L1097.5,556.5 L1098.2,556.3 L1099.0,556.1 L1101.4,554.8 L1103.9,556.1 L1105.9,549.1 L1107.1,537.4 L1108.4,541.2 L1109.4,540.4 L1110.4,544.6 L1111.4,543.6 L1112.4,549.1 L1113.3,551.6 L1114.3,548.6 L1115.8,547.1 L1116.8,552.8 L1118.8,555.3 L1121.3,556.6 L1124.3,555.3 L1125.3,547.9 L1126.3,546.1 L1127.2,548.6 L1128.2,546.6 L1129.2,550.3 L1130.2,544.6 L1131.2,551.6 L1132.7,554.1 L1134.7,556.1 L1135.4,556.8 L1136.2,555.9 L1136.9,556.4 L1137.7,556.3 L1138.4,556.8 L1139.2,556.2 L1139.9,556.2 L1140.6,556.4 L1141.4,556.2 L1142.1,556.8 L1142.9,556.7 L1143.6,556.5 L1144.1,556.1 L1145.1,553.1 L1146.1,556.1 L1148.6,556.3 L1151.1,555.6 L1151.8,529.3 L1152.3,510.6 L1152.8,529.3 L1153.3,556.1 L1153.3,556.8 L26.9,556.8 Z" fill="url(#gfill2)"/>
  <path d="M26.9,555.3 L27.4,550.6 L28.1,552.1 L28.9,550.1 L29.9,551.1 L30.6,553.6 L31.6,555.1 L32.3,556.1 L33.1,555.8 L33.8,555.9 L34.6,556.2 L35.3,556.5 L36.1,555.9 L36.8,555.9 L37.6,556.0 L38.3,556.6 L39.1,555.9 L39.8,556.6 L40.6,556.5 L41.3,555.9 L42.1,556.3 L42.8,556.2 L43.5,556.2 L44.3,556.8 L45.0,555.9 L45.8,555.8 L46.5,556.8 L47.3,556.2 L48.0,556.0 L48.8,556.1 L49.5,556.2 L50.3,556.8 L51.0,556.0 L51.8,556.0 L52.5,556.4 L53.3,556.4 L54.0,556.8 L54.8,556.7 L55.5,556.1 L56.3,556.0 L57.0,556.7 L57.8,556.8 L58.5,555.8 L59.3,556.6 L60.0,556.7 L60.7,556.5 L61.5,556.0 L62.2,556.6 L63.0,556.6 L63.7,556.0 L64.5,556.5 L65.2,556.0 L66.0,555.8 L66.7,556.1 L67.5,556.1 L68.2,556.2 L69.0,556.5 L69.7,556.7 L70.5,556.8 L71.2,556.8 L72.0,556.8 L72.7,556.6 L73.5,556.1 L74.2,555.9 L75.0,556.4 L75.7,556.4 L76.5,556.5 L77.2,555.9 L77.9,556.0 L78.7,556.8 L79.4,556.4 L80.2,556.5 L80.9,555.9 L81.7,556.2 L82.4,556.8 L83.2,556.5 L83.9,556.8 L84.7,556.0 L85.4,556.3 L86.2,556.6 L86.9,556.2 L87.4,555.3 L88.2,502.5 L88.9,555.3 L89.7,555.8 L90.4,556.0 L91.1,556.1 L91.9,556.7 L92.6,556.3 L93.4,556.5 L94.1,555.9 L94.9,556.3 L95.6,556.7 L96.4,556.3 L97.1,556.8 L97.9,556.7 L98.6,556.2 L99.4,555.8 L100.1,556.6 L100.9,555.9 L101.6,555.8 L102.4,556.6 L103.1,556.7 L103.9,556.7 L104.6,556.8 L105.4,556.0 L106.1,555.8 L106.9,555.9 L107.6,556.8 L108.4,555.9 L109.1,555.9 L109.9,555.8 L110.6,555.8 L111.4,555.8 L112.1,556.1 L112.8,555.9 L113.6,556.1 L114.3,556.8 L115.1,555.9 L115.8,556.6 L116.6,556.6 L117.3,556.4 L118.1,556.4 L118.8,556.6 L119.6,556.4 L120.3,556.0 L121.1,556.1 L121.8,556.0 L122.6,556.2 L123.3,556.8 L124.1,556.2 L124.8,555.8 L125.6,556.3 L126.3,556.6 L127.1,556.2 L127.8,556.5 L128.6,555.9 L129.3,555.8 L130.1,556.5 L130.8,555.8 L131.6,556.1 L132.3,556.2 L133.1,556.0 L133.8,555.8 L134.6,555.8 L135.3,556.8 L136.0,556.5 L136.8,556.8 L137.5,556.3 L138.5,546.6 L139.5,542.9 L140.8,529.3 L141.8,513.1 L142.5,515.6 L143.3,524.3 L144.0,520.6 L144.7,526.8 L145.5,525.5 L146.2,531.7 L147.0,544.1 L148.0,549.1 L149.5,551.1 L151.4,550.3 L153.9,552.1 L156.4,553.6 L158.9,555.3 L162.6,556.6 L166.3,555.3 L168.3,549.1 L169.3,542.9 L170.3,539.2 L171.3,545.4 L172.0,549.1 L172.5,497.0 L173.3,549.1 L174.3,555.3 L176.7,555.3 L178.7,552.8 L181.2,551.6 L183.2,551.1 L184.7,549.1 L185.7,551.6 L186.2,546.6 L186.7,504.4 L187.2,452.3 L187.7,504.4 L188.2,549.1 L189.2,552.8 L190.1,551.6 L190.9,540.4 L191.6,551.6 L192.6,550.3 L193.6,555.3 L194.4,556.4 L195.1,556.4 L195.9,556.6 L196.6,556.1 L197.3,556.5 L198.1,556.7 L198.8,556.7 L199.6,556.0 L200.3,556.5 L201.1,556.4 L201.8,556.3 L202.6,556.8 L203.3,556.3 L204.0,556.2 L204.8,556.8 L205.5,556.5 L206.3,556.1 L207.0,556.1 L207.8,556.3 L208.5,555.8 L209.3,556.4 L210.0,556.6 L210.9,556.3 L211.7,556.4 L212.4,556.7 L213.2,556.7 L213.9,556.7 L214.7,556.2 L215.4,556.8 L216.2,556.2 L216.9,556.1 L217.7,555.9 L218.4,556.3 L219.2,555.9 L219.9,556.1 L220.7,556.4 L221.4,556.6 L222.2,556.6 L223.0,555.9 L223.7,555.8 L224.5,556.0 L225.2,556.4 L226.0,556.7 L226.7,556.6 L227.5,556.8 L228.2,556.4 L229.0,556.5 L229.7,556.1 L230.5,556.1 L231.2,556.0 L232.0,556.3 L232.7,556.4 L233.5,556.4 L234.2,556.2 L235.0,556.2 L235.5,555.6 L236.2,537.2 L237.0,555.6 L237.7,556.4 L238.5,556.6 L239.2,556.6 L240.0,556.7 L240.7,556.1 L241.5,556.8 L242.2,556.4 L243.0,556.6 L243.7,556.6 L244.5,556.8 L245.2,556.1 L246.0,556.2 L246.7,556.5 L247.5,556.4 L248.2,556.6 L249.0,556.2 L249.7,556.8 L250.5,555.8 L251.2,556.5 L252.0,556.2 L252.7,555.8 L253.5,556.5 L254.2,555.8 L255.0,556.0 L255.7,556.1 L256.5,555.9 L257.2,555.9 L258.0,555.8 L258.7,556.7 L259.5,555.8 L260.2,555.9 L261.0,555.8 L261.7,556.7 L262.5,556.4 L263.2,556.7 L264.0,556.8 L264.7,556.3 L265.5,556.2 L266.2,556.2 L267.0,556.0 L267.7,556.4 L268.5,556.8 L269.2,556.3 L270.0,556.6 L270.7,556.7 L271.5,556.7 L272.2,556.5 L273.0,556.4 L273.7,555.9 L274.5,556.2 L275.2,556.7 L276.0,556.2 L276.7,556.5 L277.5,556.0 L278.2,556.4 L279.0,556.0 L279.7,556.6 L280.5,556.6 L281.2,555.8 L282.0,556.5 L282.7,555.9 L283.5,556.8 L284.3,555.9 L285.0,555.9 L285.8,556.7 L286.5,556.4 L287.3,555.8 L288.0,556.3 L288.8,556.7 L289.5,555.9 L290.3,556.6 L291.0,556.1 L291.8,556.2 L292.5,556.2 L293.3,555.8 L294.0,556.2 L294.8,556.3 L295.5,556.4 L296.3,556.3 L297.0,555.9 L297.8,556.4 L298.5,556.1 L299.3,556.1 L300.2,539.2 L301.2,516.8 L302.0,508.9 L302.7,519.3 L303.7,536.7 L304.5,546.6 L305.2,540.4 L306.2,544.1 L306.9,550.3 L307.7,541.7 L308.7,542.9 L309.7,540.4 L311.2,539.2 L312.2,539.2 L312.9,549.1 L313.6,555.3 L316.6,556.1 L317.6,552.8 L318.6,556.1 L319.4,556.1 L320.1,556.8 L320.9,556.8 L321.7,556.8 L322.5,556.6 L323.2,556.7 L324.0,555.8 L324.8,556.4 L325.6,556.0 L326.6,554.8 L329.0,556.1 L333.0,553.6 L334.0,556.1 L334.7,556.5 L335.5,555.9 L336.3,556.4 L337.0,556.7 L337.8,556.7 L338.5,556.3 L339.3,556.4 L340.1,556.2 L340.8,556.3 L341.6,555.9 L342.3,556.5 L343.1,556.4 L343.8,556.1 L344.6,556.2 L345.4,556.6 L346.1,556.2 L346.9,556.8 L347.6,556.8 L348.4,556.1 L349.9,552.1 L351.4,549.6 L352.9,551.6 L354.3,550.3 L356.3,551.1 L358.8,552.1 L361.3,551.6 L362.8,552.1 L363.8,556.1 L364.5,556.5 L365.3,556.2 L366.0,556.5 L366.8,555.8 L367.5,556.5 L368.3,556.2 L369.0,556.4 L369.8,555.9 L370.6,556.1 L371.3,556.0 L372.1,556.1 L372.8,556.6 L373.6,556.3 L374.3,556.8 L375.1,556.4 L375.8,556.0 L376.6,556.4 L377.4,556.3 L378.1,555.9 L378.9,556.3 L379.6,555.8 L380.4,556.2 L381.1,556.3 L381.9,556.5 L382.4,555.6 L383.1,536.2 L383.9,555.6 L384.6,556.0 L385.4,556.2 L386.2,556.0 L386.9,556.2 L387.7,556.4 L388.5,556.5 L389.3,556.0 L390.1,556.1 L390.8,556.0 L391.6,556.6 L392.4,556.1 L393.2,556.7 L393.9,555.8 L394.7,555.8 L395.5,556.2 L396.3,556.2 L396.8,555.6 L397.5,516.8 L398.3,555.6 L399.9,556.3 L400.7,556.7 L401.4,555.8 L402.2,556.1 L402.9,556.8 L403.7,556.5 L404.4,555.9 L405.2,556.1 L405.9,556.7 L406.7,556.2 L407.4,555.8 L408.2,556.7 L408.9,555.9 L409.7,556.5 L410.4,556.4 L411.2,556.3 L411.9,556.8 L412.7,555.9 L413.4,556.4 L414.2,555.9 L414.9,556.8 L415.7,555.9 L416.4,556.3 L417.2,556.7 L417.9,556.7 L418.7,555.9 L419.4,556.7 L420.2,556.7 L420.9,556.1 L421.7,556.6 L422.4,556.0 L423.2,555.9 L423.9,555.9 L424.7,556.1 L425.4,556.7 L426.2,556.3 L426.9,556.8 L427.7,556.7 L428.4,556.0 L429.2,556.2 L429.9,555.8 L430.7,556.4 L431.4,556.4 L432.2,556.4 L432.9,555.9 L433.7,556.4 L434.4,555.9 L435.2,556.7 L435.9,556.3 L436.7,555.9 L437.4,556.8 L438.2,556.8 L438.9,556.1 L439.7,556.8 L440.4,556.1 L441.2,556.3 L441.9,556.4 L442.7,556.6 L443.4,555.8 L444.2,555.8 L444.9,555.9 L445.7,556.2 L446.4,556.6 L447.2,556.5 L447.9,555.9 L448.7,556.6 L449.4,556.0 L450.2,555.8 L450.9,556.3 L451.7,556.8 L452.4,556.7 L453.2,556.2 L453.9,556.6 L454.7,556.0 L455.4,555.9 L456.2,556.8 L456.9,556.5 L457.7,555.9 L458.4,556.1 L459.2,556.6 L459.9,555.8 L460.7,556.0 L461.4,556.6 L462.2,556.0 L462.9,556.2 L463.7,556.2 L464.4,556.3 L465.2,556.1 L465.9,556.0 L466.7,556.6 L467.2,555.6 L467.9,508.9 L468.9,555.6 L469.7,556.2 L470.4,556.0 L471.1,555.9 L471.9,556.8 L472.6,556.4 L473.4,556.5 L474.1,556.4 L474.9,556.2 L475.6,556.6 L476.4,556.4 L477.1,556.6 L477.9,556.5 L478.6,556.7 L479.4,556.2 L480.1,555.9 L480.9,555.9 L481.6,556.5 L482.4,555.9 L483.1,556.5 L483.9,556.4 L484.6,555.8 L485.4,556.6 L486.1,555.8 L486.8,556.7 L487.6,556.7 L488.3,556.0 L489.1,556.5 L489.8,556.6 L490.6,555.9 L491.3,556.5 L492.1,555.9 L492.8,556.8 L493.6,556.5 L494.3,556.8 L495.1,555.8 L495.8,556.1 L496.6,556.4 L497.3,556.4 L498.1,556.0 L498.8,556.7 L499.6,556.7 L500.3,556.1 L501.0,555.9 L501.8,556.5 L502.5,556.2 L503.3,556.5 L504.0,556.3 L504.8,556.2 L505.5,555.8 L506.3,555.9 L507.0,556.3 L507.8,556.6 L508.5,556.2 L509.3,556.6 L510.0,556.3 L510.8,556.7 L511.5,556.5 L512.3,556.1 L513.0,555.9 L513.8,555.8 L514.5,555.8 L515.3,556.7 L516.0,556.7 L516.7,556.6 L517.5,555.9 L518.2,556.5 L519.0,555.9 L519.7,556.7 L520.5,556.5 L521.2,556.6 L522.0,556.4 L522.7,556.2 L523.5,556.7 L524.2,556.8 L525.0,556.0 L525.7,556.2 L526.5,556.6 L527.2,556.5 L528.0,556.2 L528.7,556.2 L529.5,556.8 L530.2,556.1 L531.0,556.0 L531.7,556.5 L532.4,556.1 L533.2,556.7 L533.9,556.1 L534.7,556.8 L535.4,556.2 L536.2,556.7 L536.9,556.6 L537.7,556.6 L538.4,556.0 L539.2,555.9 L539.9,555.8 L540.7,556.0 L541.4,556.5 L542.2,555.8 L542.9,556.0 L543.7,556.4 L544.4,555.9 L545.2,556.1 L545.9,556.0 L546.6,556.5 L547.4,555.9 L548.1,556.8 L548.9,556.4 L549.6,556.5 L550.4,556.4 L551.1,556.3 L551.9,556.8 L552.6,556.7 L553.4,556.7 L554.1,555.8 L554.9,556.4 L555.6,556.8 L556.4,556.5 L557.1,556.3 L557.9,556.5 L558.6,556.0 L559.4,556.6 L560.1,556.6 L560.9,555.8 L561.6,556.3 L562.3,556.4 L563.1,556.1 L563.8,556.5 L564.6,556.8 L565.3,556.7 L566.1,556.1 L566.8,555.9 L567.6,556.7 L568.3,556.4 L569.1,556.7 L569.8,556.7 L570.6,556.1 L571.3,556.4 L572.1,556.1 L572.8,556.6 L573.6,556.5 L574.3,556.0 L575.1,556.3 L575.8,556.4 L576.6,556.0 L577.3,556.0 L578.0,556.3 L578.8,555.8 L579.5,556.3 L580.3,556.8 L581.0,556.7 L581.8,555.8 L582.5,556.7 L583.3,556.5 L584.0,556.5 L584.8,555.8 L585.5,556.6 L586.3,556.0 L587.0,556.6 L587.8,556.1 L588.5,556.2 L592.4,556.5 L593.2,555.8 L593.9,556.1 L594.7,556.0 L595.4,556.6 L596.2,556.5 L596.9,556.7 L597.7,555.9 L598.4,556.2 L599.2,555.8 L599.9,556.0 L600.7,556.3 L601.4,555.8 L602.2,556.0 L603.0,556.5 L603.7,556.4 L604.5,556.0 L605.2,556.4 L606.0,556.6 L606.7,555.8 L607.5,556.6 L608.2,556.5 L609.0,556.1 L609.7,555.9 L610.5,556.8 L611.2,556.1 L612.0,555.9 L612.7,555.9 L613.5,556.7 L614.0,555.6 L615.0,508.2 L616.0,555.6 L616.7,555.8 L617.5,556.5 L618.2,555.9 L619.0,556.3 L619.7,556.5 L620.4,556.6 L621.2,556.3 L621.9,556.3 L622.7,555.8 L623.4,556.2 L624.2,556.2 L624.9,556.7 L625.7,556.4 L626.4,556.6 L627.1,556.2 L627.9,555.9 L628.6,556.7 L629.4,556.7 L630.1,556.2 L630.9,555.9 L631.6,556.3 L632.4,556.3 L633.1,556.6 L633.8,556.4 L634.6,556.3 L635.3,556.4 L636.1,556.2 L636.8,555.8 L637.6,555.8 L638.3,556.8 L639.1,556.7 L639.8,556.1 L640.5,556.7 L641.3,556.3 L642.0,555.9 L642.8,556.7 L643.5,556.4 L644.3,556.8 L645.0,556.5 L645.8,555.9 L646.5,556.4 L647.2,556.6 L648.0,556.7 L648.7,556.1 L649.5,556.3 L650.2,556.5 L651.0,555.9 L651.7,556.7 L652.5,556.6 L653.2,555.8 L653.9,556.4 L654.7,556.2 L655.4,556.0 L656.2,556.4 L656.9,556.8 L657.7,556.4 L658.4,555.9 L659.2,556.3 L659.9,556.6 L660.6,556.8 L661.4,556.5 L662.1,555.8 L662.9,555.6 L663.6,523.1 L664.6,555.6 L665.4,556.2 L666.1,556.3 L666.9,556.7 L667.6,555.9 L668.4,556.0 L669.1,555.8 L669.9,555.9 L670.6,555.8 L671.4,555.9 L672.1,556.3 L672.8,556.8 L673.6,556.5 L674.3,556.2 L675.1,556.2 L675.8,556.5 L676.6,556.1 L677.3,555.8 L678.1,556.7 L678.8,556.4 L679.6,555.9 L680.3,555.8 L681.1,555.9 L681.8,556.8 L682.6,555.9 L683.3,556.4 L684.1,556.8 L684.8,555.8 L685.6,556.2 L686.3,556.3 L687.1,556.8 L687.8,556.0 L688.6,556.0 L689.3,556.0 L690.1,555.8 L690.8,556.5 L691.6,556.6 L692.3,556.2 L693.1,555.8 L693.8,556.5 L694.6,556.6 L695.3,556.5 L696.1,556.1 L696.8,556.7 L697.6,556.4 L698.3,556.4 L699.1,556.3 L699.8,556.0 L700.6,556.3 L701.3,556.6 L702.1,556.5 L702.8,556.1 L703.6,556.7 L704.3,556.7 L705.1,555.8 L705.8,555.9 L706.6,556.0 L707.3,555.8 L708.1,556.6 L708.8,556.5 L709.6,556.3 L710.3,556.8 L711.0,556.1 L711.8,556.0 L712.5,555.9 L713.3,556.1 L714.0,556.7 L714.8,556.4 L715.5,555.8 L716.3,556.2 L717.0,555.8 L717.8,556.4 L718.5,555.9 L719.3,556.0 L720.0,556.5 L720.8,556.7 L721.5,556.4 L722.3,556.1 L723.0,556.5 L723.8,556.1 L724.5,555.8 L725.3,556.1 L726.0,556.5 L726.8,556.4 L727.5,556.0 L728.3,556.7 L729.0,556.7 L729.8,556.1 L730.5,556.8 L731.3,556.0 L732.0,555.8 L732.8,556.3 L733.5,556.7 L734.3,556.4 L735.0,556.4 L735.8,556.3 L736.5,556.1 L737.3,556.1 L738.0,556.2 L738.8,556.4 L739.5,556.8 L740.3,555.8 L741.0,556.0 L741.8,556.8 L742.5,556.5 L743.3,555.8 L744.0,556.2 L744.8,556.5 L745.5,556.8 L746.3,555.8 L747.0,555.6 L747.7,531.0 L748.7,555.6 L749.5,556.1 L750.2,556.3 L751.0,555.8 L751.7,556.1 L752.5,555.8 L753.2,555.8 L753.9,556.1 L754.7,555.9 L755.4,556.1 L756.2,556.6 L756.9,555.8 L757.7,556.4 L758.4,555.9 L759.2,556.6 L759.9,556.6 L760.6,556.0 L761.4,556.7 L762.1,556.5 L762.9,555.8 L763.6,556.2 L764.4,556.5 L765.1,556.8 L765.9,555.9 L766.6,556.0 L767.3,556.6 L768.1,556.8 L768.8,555.9 L769.6,555.9 L770.3,556.6 L771.1,556.1 L771.8,556.2 L772.6,556.7 L773.3,556.6 L774.0,556.5 L774.8,556.7 L775.5,556.6 L776.3,556.6 L777.0,556.5 L777.8,556.4 L778.5,555.8 L781.9,556.1 L783.4,549.1 L784.9,541.2 L786.4,542.9 L787.4,541.2 L788.9,544.1 L790.3,543.6 L791.8,550.3 L793.3,548.6 L794.8,551.6 L796.3,547.9 L797.8,546.1 L799.3,551.6 L800.8,548.6 L802.3,552.8 L803.3,547.9 L804.7,552.1 L806.2,551.1 L807.7,555.3 L809.7,556.6 L814.7,556.6 L815.7,554.1 L816.7,556.6 L822.6,556.6 L823.3,551.1 L824.1,556.6 L828.1,556.1 L829.1,551.6 L830.5,553.1 L832.5,553.6 L834.5,553.1 L836.0,553.6 L837.0,556.6 L837.7,556.7 L838.5,556.2 L839.3,556.4 L840.0,556.7 L840.8,556.0 L841.5,556.3 L842.3,556.4 L843.0,556.8 L843.8,555.8 L844.5,555.8 L845.3,556.1 L846.1,556.7 L846.8,556.7 L847.6,555.9 L848.3,556.8 L849.1,556.3 L849.8,556.8 L850.6,556.8 L851.4,555.9 L852.1,556.8 L852.9,556.3 L853.6,555.9 L854.4,556.1 L856.8,554.8 L859.3,554.8 L860.8,556.6 L861.6,556.1 L862.3,556.2 L863.1,556.3 L863.8,556.1 L864.5,556.3 L865.3,556.2 L866.0,555.8 L866.8,556.2 L867.5,555.8 L868.3,555.9 L869.0,556.0 L869.8,556.8 L870.5,556.3 L871.2,556.4 L872.0,556.8 L872.7,556.7 L873.5,556.4 L874.2,556.0 L875.0,556.3 L875.7,556.1 L876.5,556.8 L877.2,555.8 L877.9,556.2 L878.7,556.5 L879.4,556.4 L880.2,556.4 L880.9,556.6 L881.7,556.0 L882.4,556.7 L883.2,556.8 L883.9,555.8 L884.6,556.1 L885.4,556.2 L886.1,556.2 L886.9,556.3 L887.6,556.0 L888.4,556.5 L889.1,556.7 L889.9,556.8 L890.6,556.7 L891.3,556.0 L892.1,556.6 L892.8,556.6 L893.6,556.4 L894.3,556.5 L895.1,556.1 L895.8,556.6 L896.6,556.0 L897.3,556.4 L898.0,556.1 L898.8,554.6 L899.5,556.6 L902.3,556.6 L903.0,554.1 L904.0,556.6 L904.7,556.4 L905.5,555.9 L906.2,556.5 L907.0,556.1 L907.7,556.8 L908.5,556.0 L909.2,556.6 L910.0,555.9 L910.7,556.8 L911.4,556.7 L912.2,555.9 L912.9,556.5 L913.7,556.0 L914.4,556.3 L915.2,555.3 L916.4,556.6 L917.1,555.8 L917.9,556.2 L918.7,555.9 L919.4,556.6 L920.2,556.3 L920.9,555.8 L921.7,555.8 L922.5,556.6 L923.2,555.9 L924.0,556.6 L924.7,556.4 L925.5,556.3 L926.3,556.7 L927.0,556.4 L927.8,556.4 L928.5,556.2 L929.3,556.0 L930.0,555.9 L930.8,556.2 L931.6,556.2 L932.3,556.6 L933.1,556.0 L933.8,556.2 L934.6,556.8 L935.4,556.4 L936.1,556.5 L936.9,556.5 L937.6,556.8 L938.4,556.0 L939.2,556.6 L939.9,555.8 L940.7,556.0 L941.4,556.4 L942.2,556.1 L943.0,556.3 L943.7,556.1 L944.9,546.6 L946.2,540.4 L947.4,537.9 L948.4,531.7 L949.4,526.3 L950.4,534.2 L951.4,540.4 L952.4,534.7 L953.1,542.9 L954.1,546.6 L955.4,550.3 L956.6,555.3 L958.6,556.6 L959.3,556.3 L960.1,556.0 L960.9,556.5 L961.6,556.0 L962.4,556.3 L963.2,556.8 L963.9,555.8 L964.7,556.1 L965.5,556.5 L966.2,555.8 L967.0,555.9 L967.7,556.7 L968.5,556.8 L968.9,556.0 L969.7,556.3 L970.5,555.9 L971.3,556.7 L972.1,556.0 L972.9,556.4 L973.7,556.8 L974.5,556.2 L975.3,556.8 L976.1,556.6 L976.9,556.1 L978.4,552.8 L979.9,553.6 L981.8,550.6 L983.8,551.1 L985.3,552.1 L986.3,556.1 L987.8,555.6 L988.8,552.1 L989.8,556.1 L990.5,556.8 L991.3,555.8 L992.0,556.5 L992.8,556.3 L993.5,556.8 L994.3,556.2 L995.0,556.8 L995.8,555.9 L996.5,556.8 L997.3,556.2 L998.0,556.0 L998.8,556.1 L999.5,556.4 L1000.3,555.8 L1001.0,556.2 L1001.8,555.8 L1002.5,555.8 L1003.3,555.9 L1004.0,556.0 L1004.8,556.1 L1005.5,556.6 L1006.3,556.2 L1007.0,556.7 L1007.8,556.7 L1008.5,556.7 L1009.3,556.8 L1010.0,556.4 L1010.8,556.5 L1011.5,556.7 L1012.3,556.4 L1013.0,555.9 L1013.8,556.3 L1014.5,556.3 L1015.3,556.0 L1016.0,555.9 L1016.8,556.0 L1017.5,556.5 L1018.3,556.6 L1019.0,556.5 L1019.8,556.2 L1020.5,555.8 L1021.3,555.8 L1022.0,556.5 L1022.8,556.3 L1023.5,556.3 L1024.3,555.9 L1025.0,555.9 L1025.8,556.0 L1026.5,555.9 L1027.3,556.4 L1028.0,556.1 L1028.8,556.4 L1029.5,556.2 L1030.3,556.4 L1031.0,556.6 L1031.8,556.6 L1032.5,555.9 L1033.3,556.8 L1034.0,556.7 L1034.8,556.7 L1035.5,556.3 L1036.3,556.8 L1037.0,556.6 L1037.8,556.0 L1038.5,556.5 L1039.3,556.7 L1040.0,556.6 L1040.8,556.7 L1041.5,556.3 L1042.3,556.5 L1043.0,555.8 L1043.8,556.5 L1044.5,555.9 L1045.3,556.5 L1046.0,556.7 L1046.8,556.2 L1047.5,555.8 L1048.3,555.8 L1049.0,556.3 L1049.8,555.9 L1050.5,556.6 L1051.3,556.4 L1052.0,556.3 L1052.8,556.5 L1053.5,555.9 L1054.0,555.6 L1054.8,551.6 L1055.5,555.6 L1056.3,556.4 L1057.0,556.7 L1057.8,556.3 L1058.5,556.5 L1059.3,556.8 L1060.0,556.3 L1060.8,556.6 L1061.5,556.6 L1062.3,556.7 L1063.0,555.8 L1063.8,555.9 L1064.5,556.8 L1065.3,556.6 L1066.0,556.0 L1066.8,556.6 L1067.5,555.9 L1068.3,556.2 L1069.0,556.2 L1069.8,556.0 L1070.5,555.9 L1071.3,556.3 L1072.0,556.5 L1072.8,556.1 L1073.5,556.5 L1074.3,556.8 L1075.0,555.8 L1075.7,556.1 L1076.5,555.9 L1077.2,556.5 L1078.0,556.2 L1078.7,556.2 L1079.5,556.0 L1080.2,556.6 L1081.0,556.6 L1081.7,556.2 L1082.5,556.7 L1083.2,556.0 L1084.0,556.1 L1084.7,556.8 L1085.5,556.0 L1086.2,555.9 L1087.0,555.8 L1087.7,556.5 L1088.5,556.7 L1089.2,555.8 L1090.0,556.3 L1090.7,556.2 L1091.5,556.1 L1092.2,556.0 L1093.0,556.2 L1093.7,555.9 L1094.5,556.8 L1095.2,556.0 L1096.0,556.3 L1096.7,556.5 L1097.5,556.5 L1098.2,556.3 L1099.0,556.1 L1101.4,554.8 L1103.9,556.1 L1105.9,549.1 L1107.1,537.4 L1108.4,541.2 L1109.4,540.4 L1110.4,544.6 L1111.4,543.6 L1112.4,549.1 L1113.3,551.6 L1114.3,548.6 L1115.8,547.1 L1116.8,552.8 L1118.8,555.3 L1121.3,556.6 L1124.3,555.3 L1125.3,547.9 L1126.3,546.1 L1127.2,548.6 L1128.2,546.6 L1129.2,550.3 L1130.2,544.6 L1131.2,551.6 L1132.7,554.1 L1134.7,556.1 L1135.4,556.8 L1136.2,555.9 L1136.9,556.4 L1137.7,556.3 L1138.4,556.8 L1139.2,556.2 L1139.9,556.2 L1140.6,556.4 L1141.4,556.2 L1142.1,556.8 L1142.9,556.7 L1143.6,556.5 L1144.1,556.1 L1145.1,553.1 L1146.1,556.1 L1148.6,556.3 L1151.1,555.6 L1151.8,529.3 L1152.3,510.6 L1152.8,529.3 L1153.3,556.1" fill="none" stroke="#3ab262" stroke-width="0.72" stroke-linejoin="round"/>
  <path d="M26.9,439.9V557.2" stroke="#2f9e55" stroke-width="0.8"/>
  <path d="M25.1,461.6h1.6M25.1,485.4h1.6M25.1,509.5h1.6M25.1,533.3h1.6M25.1,557.1h1.6" stroke="#1f5f3a" stroke-width="0.6"/>

  <!-- stat sparklines -->
  <path d="M7.2,408.0 L7.2,394.4 L8.5,394.4 L9.7,408.0 M44.6,408.0 L45.3,367.5 L46.3,381.1 L48.6,381.1 L49.1,394.4 L51.1,394.7 L51.8,408.0 M53.2,408.0 L53.8,394.4 L54.9,381.1 L56.2,381.1 L56.9,408.0 M57.9,408.0 L58.6,394.4 L60.0,394.4 L60.5,408.0 M60.8,408.0 L61.2,394.4 L62.7,394.4 L63.4,408.0 M99.1,408.0 L100.2,354.2 L101.2,381.1 L102.2,367.5 L103.6,367.8 L104.3,394.4 L107.0,394.7 L107.7,408.0 M109.0,408.0 L109.7,394.7 L110.7,394.7 L111.4,408.0 M115.8,408.0 L117.2,394.4 L120.3,394.4 L121.3,408.0 M262.7,408.0 L263.4,354.2 L264.4,381.1 L268.1,381.1 L269.2,367.8 L270.2,381.1 L271.4,408.0 M278.0,408.0 L278.7,394.4 L281.1,394.4 L281.8,408.0 M286.9,408.0 L287.6,394.4 L289.3,394.4 L289.8,408.0 M316.9,408.0 L317.9,354.2 L319.3,381.1 L320.3,367.5 L321.3,381.1 L322.7,408.0 M327.8,408.0 L328.8,394.4 L330.8,394.4 L331.5,381.1 L332.5,394.4 L334.6,408.0 M371.2,408.0 L372.4,367.5 L373.4,381.1 L375.5,381.1 L377.2,401.6 L378.5,406.7 L379.2,394.4 L381.3,394.4 L381.9,408.0" fill="#ffffff" fill-opacity="0.46" stroke="#e8ffe8" stroke-opacity="0.5" stroke-width="0.5"/>
  <path d="M781.1,408.0 L781.1,392.2 L781.8,392.2 L782.8,408.0 M817.9,408.0 L819.6,364.1 L820.5,354.2 L821.7,374.3 L823.0,390.5 L824.4,393.0 L825.4,399.8 L826.4,405.0 L827.5,398.1 L828.5,392.2 L829.9,392.2 L830.5,401.6 L831.4,406.7 L832.2,398.1 L833.3,392.2 L834.3,398.1 L835.3,392.2 L836.3,392.2 L837.0,408.0 M872.4,408.0 L873.8,364.1 L874.5,354.2 L875.5,372.6 L876.5,381.1 L877.6,382.8 L878.2,393.0 L879.6,394.7 L880.6,398.1 L881.3,405.0 L882.0,408.0 M882.3,408.0 L883.0,401.6 L884.0,392.2 L884.7,401.6 L885.4,408.0 M888.8,408.0 L889.8,392.2 L894.3,392.2 L895.3,408.0 M1036.1,408.0 L1037.5,354.2 L1038.8,354.2 L1039.8,375.1 L1041.2,376.0 L1042.2,381.1 L1043.3,392.2 L1044.3,392.2 L1045.6,408.0 M1051.4,408.0 L1052.5,397.3 L1054.5,397.3 L1055.5,408.0 M1060.6,408.0 L1061.3,397.3 L1063.0,397.3 L1063.7,408.0 M1090.3,408.0 L1091.6,354.2 L1093.3,354.2 L1094.0,375.1 L1095.0,381.1 L1096.4,408.0 M1101.5,408.0 L1102.5,397.3 L1103.6,397.3 L1104.6,391.7 L1105.6,397.3 L1107.3,397.3 L1108.7,408.0 M1145.1,408.0 L1146.5,360.7 L1147.5,354.2 L1148.5,375.1 L1149.6,397.3 L1150.9,397.3 L1151.6,405.0 L1152.6,381.1 L1154.3,381.1 L1155.0,397.3 L1155.9,408.0" fill="#ffffff" fill-opacity="0.46" stroke="#e8ffe8" stroke-opacity="0.5" stroke-width="0.5"/>

  <path d="M1160.6,217.6v2h-2" fill="none" stroke="#5a5c66" stroke-width="0.6"/>
  <!-- legend swatches -->
  <rect x="13.3" y="212" width="8" height="1.4" rx=".7" fill="#3ec268"/>
  <rect x="400.7" y="398" width="7.2" height="1.4" rx=".7" fill="#3ec268"/>
</svg>
<div class="redact" style="left:123.6px;top:206.8px;width:51.4px;height:12.6px;"></div>
<div class="redact" style="left:606px;top:392.5px;width:51px;height:12.5px;"></div>
<main class="layer">
<h2 class="t" style="left:11.30px;top:44px;font-size:8.3px;line-height:12px;color:#d2d3de;letter-spacing:-0.099px;font-weight:400;">ram\1min</h2>
<h2 class="t" style="left:591.60px;top:44px;font-size:8.3px;line-height:12px;color:#d2d3de;letter-spacing:0.032px;font-weight:400;">cpu/1min</h2>
<h2 class="t" style="left:11.50px;top:230px;font-size:8.3px;line-height:12px;color:#d2d3de;letter-spacing:0.017px;font-weight:400;">confererences</h2>
<h2 class="t" style="left:398.30px;top:230px;font-size:8.3px;line-height:12px;color:#d2d3de;font-weight:400;">members</h2>
<h2 class="t" style="left:785.20px;top:230px;font-size:8.3px;line-height:12px;color:#d2d3de;letter-spacing:0.027px;font-weight:400;">members in largest conference</h2>
<h2 class="t" style="left:11.20px;top:416px;font-size:8.3px;line-height:12px;color:#d2d3de;letter-spacing:-0.380px;font-weight:400;">STRESS-LVL</h2>
<span class="t" style="left:11.68px;top:67px;font-size:6.85px;line-height:12px;color:#33ad5f;">28</span>
<span class="t" style="left:11.68px;top:92px;font-size:6.85px;line-height:12px;color:#33ad5f;">26</span>
<span class="t" style="left:11.68px;top:117px;font-size:6.85px;line-height:12px;color:#33ad5f;">24</span>
<span class="t" style="left:11.68px;top:142px;font-size:6.85px;line-height:12px;color:#33ad5f;">22</span>
<span class="t" style="left:11.68px;top:167px;font-size:6.85px;line-height:12px;color:#33ad5f;">20</span>
<span class="t" style="left:26.80px;top:195px;font-size:6.85px;line-height:12px;color:#d2d3de;letter-spacing:0.262px;">09/04 00:00</span>
<span class="t" style="left:105.30px;top:195px;font-size:6.85px;line-height:12px;color:#d2d3de;letter-spacing:0.262px;">09/05 00:00</span>
<span class="t" style="left:183.80px;top:195px;font-size:6.85px;line-height:12px;color:#d2d3de;letter-spacing:0.262px;">09/06 00:00</span>
<span class="t" style="left:262.30px;top:195px;font-size:6.85px;line-height:12px;color:#d2d3de;letter-spacing:0.262px;">09/07 00:00</span>
<span class="t" style="left:340.80px;top:195px;font-size:6.85px;line-height:12px;color:#d2d3de;letter-spacing:0.262px;">09/08 00:00</span>
<span class="t" style="left:419.30px;top:195px;font-size:6.85px;line-height:12px;color:#d2d3de;letter-spacing:0.262px;">09/09 00:00</span>
<span class="t" style="left:497.80px;top:195px;font-size:6.85px;line-height:12px;color:#d2d3de;letter-spacing:0.262px;">09/10 00:00</span>
<span class="t" style="left:594.38px;top:64px;font-size:6.85px;line-height:12px;color:#33ad5f;">60</span>
<span class="t" style="left:594.38px;top:82px;font-size:6.85px;line-height:12px;color:#33ad5f;">50</span>
<span class="t" style="left:594.38px;top:101px;font-size:6.85px;line-height:12px;color:#33ad5f;">40</span>
<span class="t" style="left:594.38px;top:120px;font-size:6.85px;line-height:12px;color:#33ad5f;">30</span>
<span class="t" style="left:594.38px;top:138px;font-size:6.85px;line-height:12px;color:#33ad5f;">20</span>
<span class="t" style="left:594.38px;top:156px;font-size:6.85px;line-height:12px;color:#33ad5f;">10</span>
<span class="t" style="left:598.19px;top:175px;font-size:6.85px;line-height:12px;color:#33ad5f;">0</span>
<span class="t" style="left:592.10px;top:193px;font-size:6.85px;line-height:12px;color:#33ad5f;">-10</span>
<span class="t" style="left:609.40px;top:208px;font-size:6.85px;line-height:12px;color:#d2d3de;letter-spacing:0.262px;">09/04 00:00</span>
<span class="t" style="left:687.48px;top:208px;font-size:6.85px;line-height:12px;color:#d2d3de;letter-spacing:0.262px;">09/05 00:00</span>
<span class="t" style="left:765.56px;top:208px;font-size:6.85px;line-height:12px;color:#d2d3de;letter-spacing:0.262px;">09/06 00:00</span>
<span class="t" style="left:843.64px;top:208px;font-size:6.85px;line-height:12px;color:#d2d3de;letter-spacing:0.262px;">09/07 00:00</span>
<span class="t" style="left:921.72px;top:208px;font-size:6.85px;line-height:12px;color:#d2d3de;letter-spacing:0.262px;">09/08 00:00</span>
<span class="t" style="left:999.80px;top:208px;font-size:6.85px;line-height:12px;color:#d2d3de;letter-spacing:0.262px;">09/09 00:00</span>
<span class="t" style="left:1077.88px;top:208px;font-size:6.85px;line-height:12px;color:#d2d3de;letter-spacing:0.262px;">09/10 00:00</span>
<span class="t" style="left:398.48px;top:269px;font-size:6.85px;line-height:12px;color:#33ad5f;">20</span>
<span class="t" style="left:398.48px;top:295px;font-size:6.85px;line-height:12px;color:#33ad5f;">15</span>
<span class="t" style="left:398.48px;top:321px;font-size:6.85px;line-height:12px;color:#33ad5f;">10</span>
<span class="t" style="left:402.29px;top:348px;font-size:6.85px;line-height:12px;color:#33ad5f;">5</span>
<span class="t" style="left:402.29px;top:374px;font-size:6.85px;line-height:12px;color:#33ad5f;">0</span>
<span class="t" style="left:406.30px;top:381px;font-size:6.85px;line-height:12px;color:#d2d3de;letter-spacing:0.262px;">09/04 00:00</span>
<span class="t" style="left:456.90px;top:381px;font-size:6.85px;line-height:12px;color:#d2d3de;letter-spacing:0.262px;">09/05 00:00</span>
<span class="t" style="left:507.50px;top:381px;font-size:6.85px;line-height:12px;color:#d2d3de;letter-spacing:0.262px;">09/06 00:00</span>
<span class="t" style="left:558.10px;top:381px;font-size:6.85px;line-height:12px;color:#d2d3de;letter-spacing:0.262px;">09/07 00:00</span>
<span class="t" style="left:608.70px;top:381px;font-size:6.85px;line-height:12px;color:#d2d3de;letter-spacing:0.262px;">09/08 00:00</span>
<span class="t" style="left:659.30px;top:381px;font-size:6.85px;line-height:12px;color:#d2d3de;letter-spacing:0.262px;">09/09 00:00</span>
<span class="t" style="left:709.90px;top:381px;font-size:6.85px;line-height:12px;color:#d2d3de;letter-spacing:0.262px;">09/10 00:00</span>
<span class="t" style="left:12.38px;top:456px;font-size:6.85px;line-height:12px;color:#33ad5f;">0.4</span>
<span class="t" style="left:12.38px;top:480px;font-size:6.85px;line-height:12px;color:#33ad5f;">0.3</span>
<span class="t" style="left:12.38px;top:504px;font-size:6.85px;line-height:12px;color:#33ad5f;">0.2</span>
<span class="t" style="left:12.38px;top:527px;font-size:6.85px;line-height:12px;color:#33ad5f;">0.1</span>
<span class="t" style="left:18.09px;top:551px;font-size:6.85px;line-height:12px;color:#33ad5f;">0</span>
<span class="t" style="left:51.70px;top:559px;font-size:6.85px;line-height:12px;color:#d2d3de;letter-spacing:0.262px;">09/04 00:00</span>
<span class="t" style="left:105.38px;top:559px;font-size:6.85px;line-height:12px;color:#d2d3de;letter-spacing:0.262px;">09/04 08:00</span>
<span class="t" style="left:159.06px;top:559px;font-size:6.85px;line-height:12px;color:#d2d3de;letter-spacing:0.262px;">09/04 16:00</span>
<span class="t" style="left:212.74px;top:559px;font-size:6.85px;line-height:12px;color:#d2d3de;letter-spacing:0.262px;">09/05 00:00</span>
<span class="t" style="left:266.42px;top:559px;font-size:6.85px;line-height:12px;color:#d2d3de;letter-spacing:0.262px;">09/05 08:00</span>
<span class="t" style="left:320.10px;top:559px;font-size:6.85px;line-height:12px;color:#d2d3de;letter-spacing:0.262px;">09/05 16:00</span>
<span class="t" style="left:373.78px;top:559px;font-size:6.85px;line-height:12px;color:#d2d3de;letter-spacing:0.262px;">09/06 00:00</span>
<span class="t" style="left:427.46px;top:559px;font-size:6.85px;line-height:12px;color:#d2d3de;letter-spacing:0.262px;">09/06 08:00</span>
<span class="t" style="left:481.14px;top:559px;font-size:6.85px;line-height:12px;color:#d2d3de;letter-spacing:0.262px;">09/06 16:00</span>
<span class="t" style="left:534.82px;top:559px;font-size:6.85px;line-height:12px;color:#d2d3de;letter-spacing:0.262px;">09/07 00:00</span>
<span class="t" style="left:588.50px;top:559px;font-size:6.85px;line-height:12px;color:#d2d3de;letter-spacing:0.262px;">09/07 08:00</span>
<span class="t" style="left:642.18px;top:559px;font-size:6.85px;line-height:12px;color:#d2d3de;letter-spacing:0.262px;">09/07 16:00</span>
<span class="t" style="left:695.86px;top:559px;font-size:6.85px;line-height:12px;color:#d2d3de;letter-spacing:0.262px;">09/08 00:00</span>
<span class="t" style="left:749.54px;top:559px;font-size:6.85px;line-height:12px;color:#d2d3de;letter-spacing:0.262px;">09/08 08:00</span>
<span class="t" style="left:803.22px;top:559px;font-size:6.85px;line-height:12px;color:#d2d3de;letter-spacing:0.262px;">09/08 16:00</span>
<span class="t" style="left:856.90px;top:559px;font-size:6.85px;line-height:12px;color:#d2d3de;letter-spacing:0.262px;">09/09 00:00</span>
<span class="t" style="left:910.58px;top:559px;font-size:6.85px;line-height:12px;color:#d2d3de;letter-spacing:0.262px;">09/09 08:00</span>
<span class="t" style="left:964.26px;top:559px;font-size:6.85px;line-height:12px;color:#d2d3de;letter-spacing:0.262px;">09/09 16:00</span>
<span class="t" style="left:1017.94px;top:559px;font-size:6.85px;line-height:12px;color:#d2d3de;letter-spacing:0.262px;">09/10 00:00</span>
<span class="t" style="left:1071.62px;top:559px;font-size:6.85px;line-height:12px;color:#d2d3de;letter-spacing:0.262px;">09/10 08:00</span>
<span class="t" style="left:1120px;top:558px;width:38.6px;height:12px;overflow:hidden;"><span class="t" style="left:5.30px;top:1px;font-size:6.85px;line-height:12px;color:#d2d3de;letter-spacing:0.262px;">09/10 16:00</span></span>
<span class="t" style="left:26.00px;top:207px;font-size:6.85px;line-height:12px;color:#d2d3de;letter-spacing:0.134px;">{component="infra", instance="</span>
<span class="t" style="left:175.60px;top:207px;font-size:6.85px;line-height:12px;color:#d2d3de;letter-spacing:0.087px;">", job="jitsi_node_exporter", service="jitsi"}</span>
<span class="t" style="left:412.30px;top:393px;font-size:6.85px;line-height:12px;color:#d2d3de;letter-spacing:0.089px;">{__name__="jitsi_participants", component="infra", instance="</span>
<span class="t" style="left:657.60px;top:393px;font-size:6.85px;line-height:12px;color:#d2d3de;">", job="jitsi_node_export...</span>
<div class="t" style="left:157.9px;top:271.5px;width:80px;height:110px;text-align:center;font-size:94px;line-height:110px;color:#f6f7f9;-webkit-text-stroke:2.6px #f6f7f9;transform:scaleX(1.03);">0</div>
<div class="t" style="left:931.4px;top:271.5px;width:80px;height:110px;text-align:center;font-size:94px;line-height:110px;color:#f6f7f9;-webkit-text-stroke:2.6px #f6f7f9;transform:scaleX(1.03);">0</div>
</main>
</body>
</html>
